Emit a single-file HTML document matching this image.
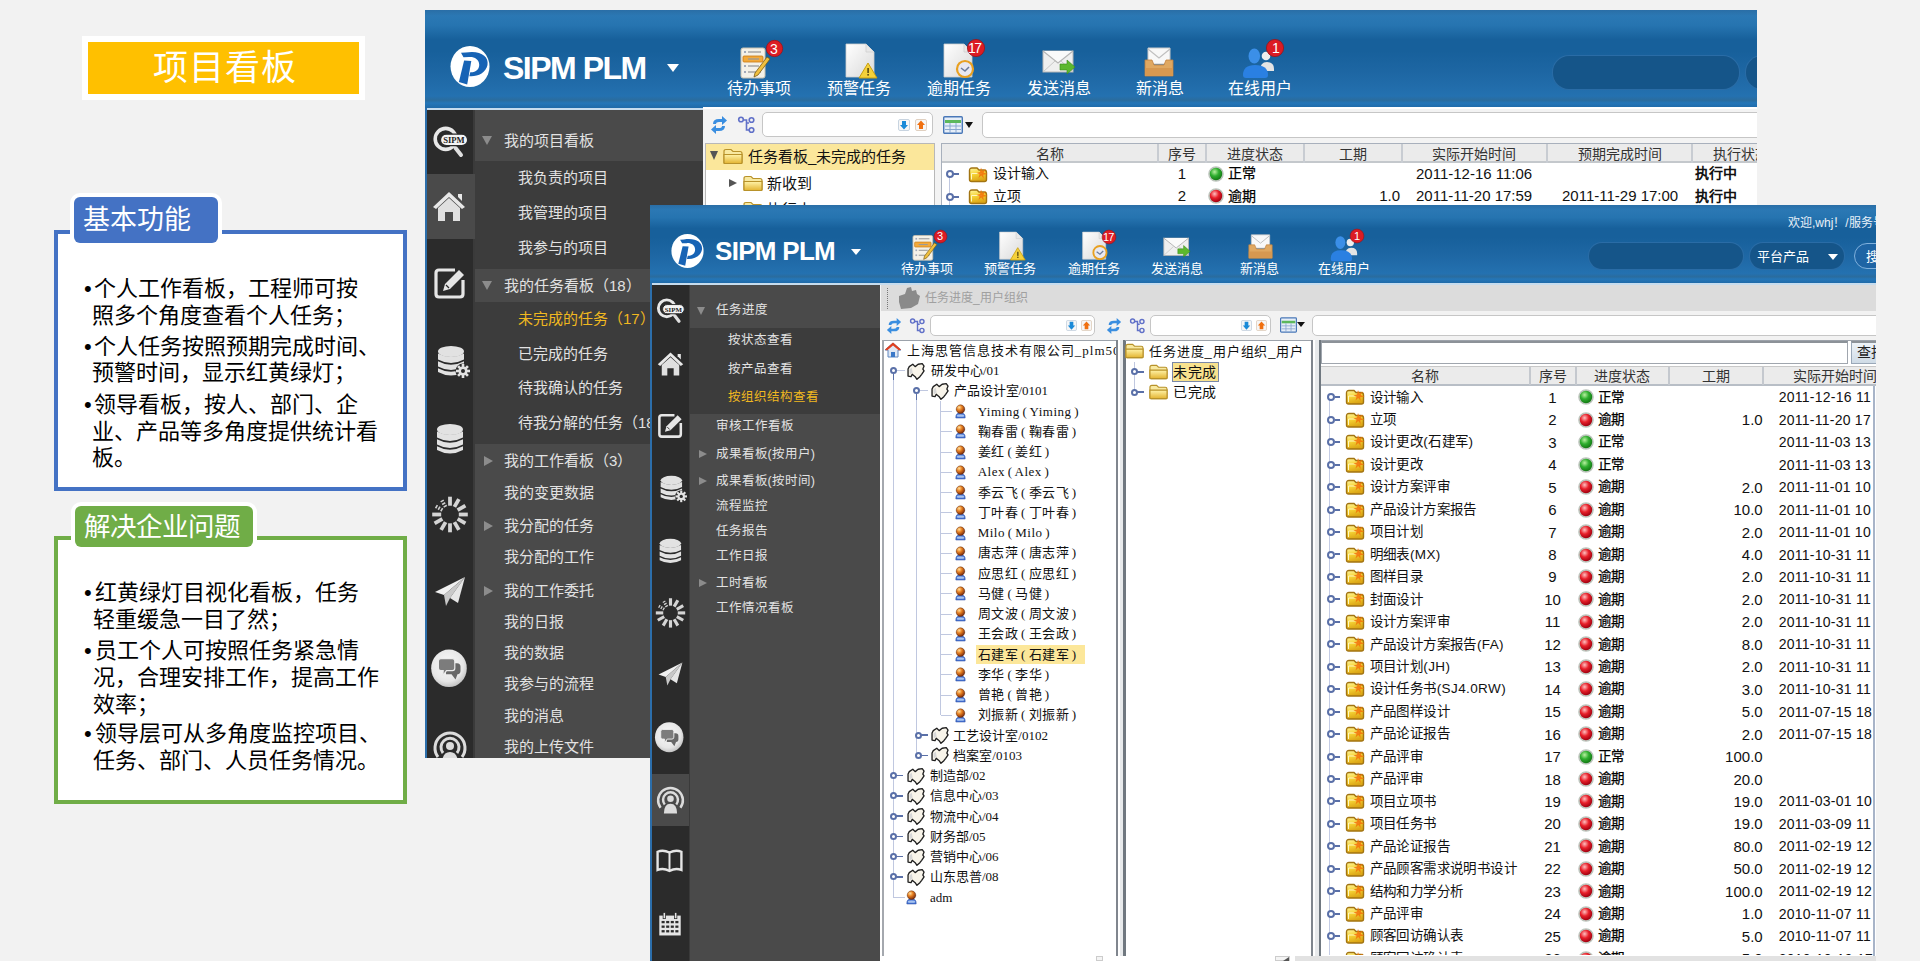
<!DOCTYPE html>
<html lang="zh-CN"><head><meta charset="utf-8">
<style>
*{margin:0;padding:0;box-sizing:border-box}
html,body{width:1920px;height:961px;overflow:hidden;background:#f2f2f2;font-family:"Liberation Sans",sans-serif}
.a{position:absolute}
.t{position:absolute;white-space:nowrap;line-height:1}
/* slide */
#title{left:82px;top:36px;width:283px;height:64px;background:#fff}
#title .in{left:6px;top:6px;width:271px;height:52px;background:#ffc000}
.box{border:4px solid #4472c4;background:#fff}
.tab{border-radius:6px;box-shadow:0 0 0 4px #fff}
.bul{font-size:22px;color:#000;line-height:26px}
/* windows */
.hdr{background:linear-gradient(#2a6ea6 0%,#2b78b4 6%,#2674b0 16%,#17609b 30%,#17609b 42%,#1e67a4 65%,#2471b0 88%,#2a6c9e 92%,#2476b8 95%,#1f6aa8 100%)}
.icol{background:#2b2b2b}
.menu{background:#4a4a4a}
.sub{background:#3c3c3c}
.mt{color:#e0e0e0}
.tri-d{width:0;height:0;border-left:5px solid transparent;border-right:5px solid transparent;border-top:9px solid #8c8c8c}
.tri-r{width:0;height:0;border-top:5px solid transparent;border-bottom:5px solid transparent;border-left:9px solid #8c8c8c}
</style></head><body>
<svg width="0" height="0" style="position:absolute">
<defs>
<linearGradient id="gPaper" x1="0" y1="0" x2="1" y2="1"><stop offset="0" stop-color="#ffffff"/><stop offset="1" stop-color="#d9d9d9"/></linearGradient>
<linearGradient id="gFold" x1="0" y1="0" x2="0" y2="1"><stop offset="0" stop-color="#fff3a8"/><stop offset="1" stop-color="#e3b431"/></linearGradient>
<radialGradient id="gGreen" cx="0.4" cy="0.35" r="0.6"><stop offset="0" stop-color="#b8f0a0"/><stop offset="0.5" stop-color="#2fae2f"/><stop offset="1" stop-color="#137a13"/></radialGradient>
<radialGradient id="gRed" cx="0.4" cy="0.35" r="0.6"><stop offset="0" stop-color="#ffc0c0"/><stop offset="0.5" stop-color="#e8202a"/><stop offset="1" stop-color="#a00010"/></radialGradient>
<radialGradient id="gChat" cx="0.45" cy="0.4" r="0.6"><stop offset="0" stop-color="#fafafa"/><stop offset="0.75" stop-color="#e6e6e6"/><stop offset="1" stop-color="#c4c4c4"/></radialGradient>
<symbol id="logo" viewBox="0 0 40 41"><ellipse cx="20" cy="20.5" rx="19.5" ry="20.5" fill="#fff"/><path d="M14.1 14.6 L21.3 15.1 L17.2 38.5 L8.9 35.9 Z" fill="#1763b5"/><path d="M11 6.8 L15.6 6.5 C30 4 39 10 37.5 19 C36 27 27 31 19.3 30.2 L20.3 26.3 C26 26.5 29.5 23 29.2 18.5 C29 13 24 10.5 19 11 L13.5 11.2 Z" fill="#1763b5"/></symbol>
<symbol id="i-todo" viewBox="0 0 30 34"><rect x="1" y="3" width="24" height="30" rx="2" fill="#f4f1e8" stroke="#c9c2b0" stroke-width="1"/><rect x="3" y="11" width="20" height="6" rx="1" fill="#f2a93b" stroke="#c97a10" stroke-width="0.8"/><g stroke="#9a9a9a" stroke-width="1.3"><line x1="8" y1="7" x2="21" y2="7"/><line x1="8" y1="14" x2="19" y2="14"/><line x1="8" y1="21" x2="19" y2="21"/><line x1="8" y1="27" x2="21" y2="27"/></g><g fill="#a0a8b8"><rect x="4" y="6" width="2" height="2"/><rect x="4" y="20" width="2" height="2"/><rect x="4" y="26" width="2" height="2"/></g><path d="M15 28 L27 12 L30 14 L18 30 L14 32 Z" fill="#f0c040" stroke="#7a5a10" stroke-width="0.8"/></symbol>
<symbol id="i-doc" viewBox="0 0 34 36"><path d="M2 1 H22 L30 9 V34 H2 Z" fill="url(#gPaper)" stroke="#cfcfcf" stroke-width="0.8"/><path d="M22 1 V9 H30" fill="#e8e8e8" stroke="#cfcfcf" stroke-width="0.8"/></symbol>
<symbol id="i-warn" viewBox="0 0 34 36"><use href="#i-doc"/><path d="M24 20 L33 35 H15 Z" fill="#f5d13a" stroke="#c9a010" stroke-width="1"/><rect x="23.3" y="25" width="1.6" height="5" fill="#5a4a10"/><rect x="23.3" y="31" width="1.6" height="1.6" fill="#5a4a10"/></symbol>
<symbol id="i-over" viewBox="0 0 34 36"><use href="#i-doc"/><circle cx="23" cy="26" r="8" fill="#e8e8f0" stroke="#e8a020" stroke-width="2.2"/><path d="M19 25 L23 28 L27 24" stroke="#6a7a9a" stroke-width="1.5" fill="none"/></symbol>
<symbol id="i-send" viewBox="0 0 34 26"><rect x="1" y="1" width="30" height="21" fill="#efefef" stroke="#b5b5b5" stroke-width="1"/><path d="M1 1 L16 13 L31 1" stroke="#b5b5b5" stroke-width="1.2" fill="#fafafa"/><path d="M1 22 L13 11 M31 22 L19 11" stroke="#c8c8c8" stroke-width="1"/><path d="M18 14 H25 V10 L33 17 L25 24 V20 H18 Z" fill="#5cb82e" stroke="#3a8a18" stroke-width="0.6"/></symbol>
<symbol id="i-inbox" viewBox="0 0 30 32"><path d="M4 2 H26 V18 H4 Z" fill="#f8f8f8" stroke="#c8c8c8" stroke-width="1"/><path d="M4 3 L15 12 L26 3" stroke="#c0c0c0" stroke-width="1.2" fill="none"/><path d="M1 14 H8 L10 19 H20 L22 14 H29 V30 H1 Z" fill="#e0a861" stroke="#c08040" stroke-width="0.8"/><rect x="1" y="22" width="28" height="8" fill="#d79850"/></symbol>
<symbol id="i-users" viewBox="0 0 34 34"><circle cx="25" cy="10" r="4.3" fill="#eeeeee"/><path d="M19 25 Q19 16 26 16 Q33 16 33 23 V25 Z" fill="#e4e4e4"/><ellipse cx="13.3" cy="10" rx="5.8" ry="7.5" fill="#3b8fe8"/><path d="M2 29 Q2 19 14 19 Q27 19 27 29 Q27 32 24 32 H5 Q2 32 2 29 Z" fill="#2a80e2"/></symbol>
<symbol id="badge" viewBox="0 0 20 20"><circle cx="10" cy="10" r="8.6" fill="#dc1c24" stroke="#9a1418" stroke-width="0.8"/></symbol>
<!-- sidebar icons -->
<symbol id="s-sipm" viewBox="0 0 40 40"><circle cx="14.7" cy="17.9" r="10.5" fill="none" stroke="#e8e8e8" stroke-width="3.6"/><path d="M24.5 27 L30 34" stroke="#e0e0e0" stroke-width="4" stroke-linecap="round"/><rect x="9.5" y="13.2" width="27.1" height="11.5" rx="5.7" fill="#f4f4f4" stroke="#2b2b2b" stroke-width="1.2"/><text x="23" y="21.9" font-family="Liberation Serif" font-size="8.6" text-anchor="middle" fill="#222" font-weight="bold">SIPM</text></symbol>
<symbol id="s-home" viewBox="0 0 34 34"><path d="M17 3 L1 18 L4 20 L17 8 L30 20 L33 18 Z" fill="#e8e8e8"/><path d="M26 5 H30 V12 L26 8 Z" fill="#e8e8e8"/><path d="M6 19 L17 9 L28 19 V32 H21 V23 H13 V32 H6 Z" fill="#e0e0e0"/></symbol>
<symbol id="s-edit" viewBox="0 0 34 34"><path d="M22 4 H6 Q3 4 3 7 V28 Q3 31 6 31 H27 Q30 31 30 28 V14" fill="none" stroke="#e6e6e6" stroke-width="3.2"/><path d="M10 25 L12 18 L26 4 L31 9 L17 23 Z" fill="#e6e6e6"/><path d="M13 19 L16 22" stroke="#2b2b2b" stroke-width="1.2"/></symbol>
<symbol id="s-db" viewBox="0 0 34 34"><g fill="#e2e2e2"><ellipse cx="15" cy="6.5" rx="13" ry="5.5"/><path d="M2 8.5 Q15 15.5 28 8.5 V14.5 Q15 21.5 2 14.5 Z"/><path d="M2 16.3 Q15 23.3 28 16.3 V21.5 Q15 28.5 2 21.5 Z"/><path d="M2 23.3 Q15 30.3 28 23.3 V27 Q15 34 2 27 Z"/></g></symbol>
<symbol id="s-dbg" viewBox="0 0 36 34"><use href="#s-db"/><circle cx="28" cy="26" r="7.5" fill="#2b2b2b"/><g transform="translate(28 26)" fill="#e2e2e2"><circle r="4.5"/><g id="teeth"><rect x="-1.3" y="-7" width="2.6" height="14"/><rect x="-7" y="-1.3" width="14" height="2.6"/><rect x="-1.3" y="-7" width="2.6" height="14" transform="rotate(45)"/><rect x="-1.3" y="-7" width="2.6" height="14" transform="rotate(-45)"/></g></g><circle cx="28" cy="26" r="2" fill="#2b2b2b"/></symbol>
<symbol id="s-spin" viewBox="0 0 40 40"><line x1="20.0" y1="11.7" x2="20.0" y2="2.7" stroke="#d4d4d4" stroke-width="3.8"/><line x1="24.4" y1="12.9" x2="28.9" y2="5.1" stroke="#d4d4d4" stroke-width="3.8"/><line x1="27.6" y1="16.1" x2="35.4" y2="11.6" stroke="#d4d4d4" stroke-width="3.8"/><line x1="28.8" y1="20.5" x2="37.8" y2="20.5" stroke="#d4d4d4" stroke-width="3.8"/><line x1="27.6" y1="24.9" x2="35.4" y2="29.4" stroke="#d4d4d4" stroke-width="3.8"/><line x1="24.4" y1="28.1" x2="28.9" y2="35.9" stroke="#d4d4d4" stroke-width="3.8"/><line x1="20.0" y1="29.3" x2="20.0" y2="38.3" stroke="#d4d4d4" stroke-width="3.8"/><line x1="15.6" y1="28.1" x2="11.1" y2="35.9" stroke="#d4d4d4" stroke-width="3.8"/><line x1="12.4" y1="24.9" x2="4.6" y2="29.4" stroke="#d4d4d4" stroke-width="3.8"/><line x1="11.2" y1="20.5" x2="2.2" y2="20.5" stroke="#d4d4d4" stroke-width="3.8"/><line x1="12.4" y1="16.1" x2="4.6" y2="11.6" stroke="#cfcfcf" stroke-width="3.6" stroke-dasharray="1.6 1.4"/><line x1="15.6" y1="12.9" x2="11.1" y2="5.1" stroke="#cfcfcf" stroke-width="3.6" stroke-dasharray="1.6 1.4"/></symbol>
<symbol id="s-plane" viewBox="0 0 34 34"><path d="M32 2 L2 17 L11 20 Z" fill="#f0f0f0"/><path d="M32 2 L11 20 L13 31 L17 23 Z" fill="#c8c8c8"/><path d="M32 2 L17 23 L25 28 Z" fill="#e6e6e6"/></symbol>
<symbol id="s-chat" viewBox="0 0 40 40"><ellipse cx="19" cy="20.3" rx="17.8" ry="18.8" fill="url(#gChat)"/><path d="M16 15.3 H27 Q30.5 15.3 30.5 18.8 V22.8 Q30.5 26.2 27.5 26.2 L25.5 31.5 L21.5 26.2 H16 Z" fill="#686868"/><path d="M10.8 10.6 H22.4 Q24.8 10.6 24.8 13 V20.2 Q24.8 22.6 22.4 22.6 H16.5 L12.8 27.8 L13.2 22.6 H10.8 Q8.4 22.6 8.4 20.2 V13 Q8.4 10.6 10.8 10.6 Z" fill="#7c7c7c" stroke="#ececec" stroke-width="1.2"/></symbol>
<symbol id="s-radar" viewBox="0 0 40 40"><g fill="none" stroke="#dcdcdc" stroke-width="3"><path d="M8 30 A15 15 0 1 1 32 30"/><path d="M13 26 A9 9 0 1 1 27 26"/></g><circle cx="20" cy="19" r="4" fill="#dcdcdc"/><path d="M12 37 Q12 25 20 25 Q28 25 28 37 Z" fill="#dcdcdc"/></symbol>
<symbol id="s-book" viewBox="0 0 34 34"><path d="M2 6 Q9 3 17 7 Q25 3 32 6 V29 Q25 26 17 30 Q9 26 2 29 Z" fill="none" stroke="#e6e6e6" stroke-width="3"/><line x1="17" y1="7" x2="17" y2="30" stroke="#e6e6e6" stroke-width="2.5"/></symbol>
<symbol id="s-cal" viewBox="0 0 34 34"><rect x="3" y="6" width="28" height="26" fill="#e6e6e6"/><rect x="8" y="2" width="3" height="8" fill="#e6e6e6" stroke="#2b2b2b" stroke-width="1"/><rect x="23" y="2" width="3" height="8" fill="#e6e6e6" stroke="#2b2b2b" stroke-width="1"/><g fill="#2b2b2b"><rect x="6" y="13" width="4" height="3"/><rect x="12" y="13" width="4" height="3"/><rect x="18" y="13" width="4" height="3"/><rect x="24" y="13" width="4" height="3"/><rect x="6" y="19" width="4" height="3"/><rect x="12" y="19" width="4" height="3"/><rect x="18" y="19" width="4" height="3"/><rect x="24" y="19" width="4" height="3"/><rect x="6" y="25" width="4" height="3"/><rect x="12" y="25" width="4" height="3"/><rect x="18" y="25" width="4" height="3"/><rect x="24" y="25" width="4" height="3"/></g></symbol>
<!-- content icons -->
<symbol id="c-refresh" viewBox="0 0 18 18"><path d="M3 8 Q3 3 9 3 H12 V0 L17 4.5 L12 9 V6 H9 Q6 6 6 8 Z" fill="#3a8ee0"/><path d="M15 10 Q15 15 9 15 H6 V18 L1 13.5 L6 9 V12 H9 Q12 12 12 10 Z" fill="#3a8ee0"/></symbol>
<symbol id="c-tree" viewBox="0 0 18 18"><g fill="none" stroke="#6070c8" stroke-width="1.6"><circle cx="3.5" cy="3.5" r="2.3"/><circle cx="14" cy="4" r="2.3"/><circle cx="14" cy="14" r="2.3"/><path d="M6 4 H9 V14 H11.5 M9 7 H11.5"/></g></symbol>
<symbol id="c-down" viewBox="0 0 12 12"><rect x="0.5" y="0.5" width="11" height="11" rx="1.5" fill="#f6f6f6" stroke="#c8d4e0"/><path d="M4 2 H8 V6 H10 L6 10.5 L2 6 H4 Z" fill="#1a8ad8"/></symbol>
<symbol id="c-up" viewBox="0 0 12 12"><rect x="0.5" y="0.5" width="11" height="11" rx="1.5" fill="#f6f6f6" stroke="#e0d0c0"/><path d="M4 10 H8 V6 H10 L6 1.5 L2 6 H4 Z" fill="#f07010"/></symbol>
<symbol id="c-grid" viewBox="0 0 20 18"><rect x="0.7" y="0.7" width="18.6" height="16.6" rx="1" fill="#e6eef8" stroke="#4a78b8" stroke-width="1.4"/><rect x="2" y="4" width="16" height="3" fill="#5cb85c"/><g stroke="#8aa8d0" stroke-width="1"><line x1="2" y1="10" x2="18" y2="10"/><line x1="2" y1="13.5" x2="18" y2="13.5"/><line x1="7" y1="7" x2="7" y2="17"/><line x1="13" y1="7" x2="13" y2="17"/></g></symbol>
<symbol id="c-folder" viewBox="0 0 20 16"><path d="M1 3 Q1 1 3 1 H8 L10 3 H17 Q19 3 19 5 V14 Q19 15 18 15 H2 Q1 15 1 14 Z" fill="#f8e9a0" stroke="#b8922a" stroke-width="1.2"/><path d="M1 6 H19 V14 Q19 15 18 15 H2 Q1 15 1 14 Z" fill="url(#gFold)" stroke="#b8922a" stroke-width="1.2"/></symbol>
<symbol id="c-tfolder" viewBox="0 0 20 16"><defs><linearGradient id="gTF" x1="0" y1="0" x2="0.3" y2="1"><stop offset="0" stop-color="#fff6a0"/><stop offset="0.5" stop-color="#f6d436"/><stop offset="1" stop-color="#dca616"/></linearGradient></defs><path d="M1.5 4 Q1.5 1.5 4 1.5 H9 L11 3.5 H16 Q18.5 3.5 18.5 6 V13 Q18.5 15 16.5 15 H3.5 Q1.5 15 1.5 13 Z" fill="url(#gTF)" stroke="#a27412" stroke-width="1.4"/><path d="M3.5 7 H14 M3.5 7 V13" stroke="#fff8c0" stroke-width="1" fill="none"/><path d="M13 1 L14.3 4.5 L18 2.5 L15.6 6 L19.5 7.5 L15.2 8.2 L15.8 12 L13.2 9 L10.5 11.5 L11.6 7.8 L8.5 6.5 L12 5.5 Z" fill="#f2760c" opacity="0.9"/></symbol>
<symbol id="c-house" viewBox="0 0 16 16"><path d="M8 1 L0 8 H3 V15 H13 V8 H16 Z" fill="#e0e8f4" stroke="#6088c0" stroke-width="1"/><path d="M8 0.5 L0 7.5 L2 8.5 L8 3.5 L14 8.5 L16 7.5 Z" fill="#e04020"/><rect x="6" y="10" width="4" height="5" fill="#3a78c8"/></symbol>
<symbol id="c-org" viewBox="0 0 19 19"><path d="M1.1 7.4 L2.4 4.9 L6.1 2.4 L8.6 4.9 L11.75 2.4 L16.1 1.75 L18 4.25 L16.75 7.4 L18 9.25 L15.5 13 L13.6 15.5 L10.5 18.3 L8.6 15.5 L5.5 13 L4.25 15.5 L1.1 14.9 L1.1 10.5 Z" fill="#f8f4ea" stroke="#1e1e1e" stroke-width="1.4" stroke-linejoin="round"/><path d="M2.5 8 L5 6 L6 11 L3 13 Z" fill="#d8d8d8"/></symbol>
<symbol id="c-user" viewBox="0 0 14 16"><defs><radialGradient id="gHead" cx="0.35" cy="0.3" r="0.7"><stop offset="0" stop-color="#ffe0a0"/><stop offset="0.45" stop-color="#e88020"/><stop offset="1" stop-color="#803010"/></radialGradient></defs><path d="M2 15.5 Q1.5 10 7 10 Q12.5 10 12 15.5 Z" fill="#4a78d8" stroke="#2a4aa0" stroke-width="0.6"/><ellipse cx="7" cy="13" rx="4" ry="1.3" fill="#a8c4f0"/><circle cx="7" cy="6" r="4.6" fill="url(#gHead)" stroke="#5a2a10" stroke-width="0.5"/></symbol>
<symbol id="c-dot" viewBox="0 0 14 14"><circle cx="7" cy="7" r="6.5" fill="#d8d8d8"/></symbol>
</defs></svg>

<!-- ============ LEFT SLIDE ============ -->
<div id="title" class="a"><div class="a in"></div>
<div class="t" style="left:71px;top:15px;font-family:'Liberation Serif',serif;font-size:35px;color:#fff;letter-spacing:1px">项目看板</div></div>

<div class="a box" style="left:54px;top:230px;width:353px;height:261px"></div>
<div class="a tab" style="left:74px;top:197px;width:144px;height:46px;background:#4472c4"></div>
<div class="t" style="left:82.5px;top:207px;font-size:27px;color:#fff">基本功能</div>
<div class="a bul" style="left:84px;top:278px;width:310px">
<div class="t" style="left:0;top:0"><span style="margin-right:2.5px">•</span>个人工作看板，工程师可按</div>
<div class="t" style="left:7.5px;top:27px">照多个角度查看个人任务；</div>
<div class="t" style="left:0;top:58px"><span style="margin-right:2.5px">•</span>个人任务按照预期完成时间、</div>
<div class="t" style="left:7.5px;top:84px">预警时间，显示红黄绿灯；</div>
<div class="t" style="left:0;top:116px"><span style="margin-right:2.5px">•</span>领导看板，按人、部门、企</div>
<div class="t" style="left:7.5px;top:143px">业、产品等多角度提供统计看</div>
<div class="t" style="left:7.5px;top:169px">板。</div>
</div>
<div class="a box" style="left:54px;top:536px;width:353px;height:268px;border-color:#70ad47"></div>
<div class="a tab" style="left:75px;top:506px;width:178px;height:41px;background:#70ad47"></div>
<div class="t" style="left:84px;top:513.5px;font-size:26.5px;color:#fff">解决企业问题</div>
<div class="a bul" style="left:84px;top:582px;width:310px">
<div class="t" style="left:0;top:0"><span style="margin-right:3px">•</span>红黄绿灯目视化看板，任务</div>
<div class="t" style="left:9px;top:27px">轻重缓急一目了然；</div>
<div class="t" style="left:0;top:58px"><span style="margin-right:3px">•</span>员工个人可按照任务紧急情</div>
<div class="t" style="left:9px;top:85px">况，合理安排工作，提高工作</div>
<div class="t" style="left:9px;top:112px">效率；</div>
<div class="t" style="left:0;top:141px"><span style="margin-right:3px">•</span>领导层可从多角度监控项目、</div>
<div class="t" style="left:9px;top:168px">任务、部门、人员任务情况。</div>
</div>

<!-- ============ BACK WINDOW ============ -->
<div id="w1" class="a" style="left:425px;top:10px;width:1332px;height:748px;background:#fff;overflow:hidden">
  <div class="a hdr" style="left:0;top:0;width:1332px;height:98px"></div>

  <!-- header content -->
  <svg class="a" style="left:25px;top:36px" width="40" height="41"><use href="#logo"/></svg>
  <div class="t" style="left:78px;top:42px;font-size:32px;font-weight:bold;color:#fff;letter-spacing:-1.5px">SIPM PLM</div>
  <div class="a" style="left:242px;top:54px;width:0;height:0;border-left:6.5px solid transparent;border-right:6.5px solid transparent;border-top:8px solid #fff"></div>
  <svg class="a" style="left:315px;top:35px" width="30" height="34"><use href="#i-todo"/></svg>
  <svg class="a" style="left:340px;top:29px" width="19" height="19"><use href="#badge"/></svg><div class="t" style="left:345px;top:32px;font-size:14px;color:#fff">3</div>
  <div class="t" style="left:302px;top:71px;font-size:16px;color:#fff">待办事项</div>
  <svg class="a" style="left:419px;top:33px" width="34" height="36"><use href="#i-warn"/></svg>
  <div class="t" style="left:402px;top:71px;font-size:16px;color:#fff">预警任务</div>
  <svg class="a" style="left:517px;top:33px" width="34" height="36"><use href="#i-over"/></svg>
  <svg class="a" style="left:541px;top:28px" width="20" height="20"><use href="#badge"/></svg><div class="t" style="left:543px;top:31px;font-size:14px;color:#fff;letter-spacing:-1.5px">17</div>
  <div class="t" style="left:502px;top:71px;font-size:16px;color:#fff">逾期任务</div>
  <svg class="a" style="left:617px;top:40px" width="34" height="26"><use href="#i-send"/></svg>
  <div class="t" style="left:602px;top:71px;font-size:16px;color:#fff">发送消息</div>
  <svg class="a" style="left:719px;top:36px" width="30" height="32"><use href="#i-inbox"/></svg>
  <div class="t" style="left:711px;top:71px;font-size:16px;color:#fff">新消息</div>
  <svg class="a" style="left:816px;top:36px" width="34" height="34"><use href="#i-users"/></svg>
  <svg class="a" style="left:840px;top:28px" width="20" height="20"><use href="#badge"/></svg><div class="t" style="left:847px;top:31px;font-size:14px;color:#fff">1</div>
  <div class="t" style="left:803px;top:71px;font-size:16px;color:#fff">在线用户</div>
  <div class="a" style="left:1128px;top:46px;width:186px;height:33px;border-radius:16px;background:#155589;box-shadow:0 0 0 1px #2a6ca6"></div>
  <div class="a" style="left:1321px;top:46px;width:40px;height:33px;border-radius:16px;background:#155589;box-shadow:0 0 0 1px #2a6ca6"></div>
  <div class="a" style="left:0;top:98px;width:1332px;height:2px;background:#c6dcee"></div>
  <div class="a" style="left:0;top:98px;width:2px;height:650px;background:#2c6eaa"></div>
  <div class="a icol" style="left:2px;top:100px;width:46px;height:648px"></div>
  <div class="a" style="left:48px;top:100px;width:2px;height:648px;background:#3a3a3a"></div>
  <div class="a menu" style="left:50px;top:100px;width:228px;height:648px"></div>
  <div class="a menu" style="left:2px;top:164px;width:48px;height:65px"></div>
  <svg class="a" style="left:6px;top:111px" width="40" height="40"><use href="#s-sipm"/></svg>
  <svg class="a" style="left:7px;top:179px" width="34" height="34"><use href="#s-home"/></svg>
  <svg class="a" style="left:8px;top:256px" width="34" height="34"><use href="#s-edit"/></svg>
  <svg class="a" style="left:10px;top:335px" width="36" height="34"><use href="#s-dbg"/></svg>
  <svg class="a" style="left:10px;top:413px" width="34" height="34"><use href="#s-db"/></svg>
  <svg class="a" style="left:5px;top:484px" width="40" height="40"><use href="#s-spin"/></svg>
  <svg class="a" style="left:8px;top:565px" width="34" height="34"><use href="#s-plane"/></svg>
  <svg class="a" style="left:5px;top:638px" width="40" height="40"><use href="#s-chat"/></svg>
  <svg class="a" style="left:5px;top:717px" width="40" height="40"><use href="#s-radar"/></svg>
  <div class="a sub" style="left:50px;top:151px;width:228px;height:108px"></div>
  <div class="a sub" style="left:50px;top:292px;width:228px;height:142px"></div>
  <div class="t mt" style="left:79px;top:123px;font-size:15px;color:#e2e2e2">我的项目看板</div>
  <div class="a tri-d" style="left:57px;top:126px"></div>
  <div class="t mt" style="left:93px;top:160px;font-size:15px;color:#e2e2e2">我负责的项目</div>
  <div class="t mt" style="left:93px;top:195px;font-size:15px;color:#e2e2e2">我管理的项目</div>
  <div class="t mt" style="left:93px;top:230px;font-size:15px;color:#e2e2e2">我参与的项目</div>
  <div class="t mt" style="left:79px;top:268px;font-size:15px;color:#e2e2e2">我的任务看板（18）</div>
  <div class="a tri-d" style="left:57px;top:271px"></div>
  <div class="t mt" style="left:93px;top:301px;font-size:15px;color:#f0b820">未完成的任务（17）</div>
  <div class="t mt" style="left:93px;top:336px;font-size:15px;color:#e2e2e2">已完成的任务</div>
  <div class="t mt" style="left:93px;top:370px;font-size:15px;color:#e2e2e2">待我确认的任务</div>
  <div class="t mt" style="left:93px;top:405px;font-size:15px;color:#e2e2e2">待我分解的任务（18）</div>
  <div class="t mt" style="left:79px;top:443px;font-size:15px;color:#e2e2e2">我的工作看板（3）</div>
  <div class="a tri-r" style="left:59px;top:446px"></div>
  <div class="t mt" style="left:79px;top:475px;font-size:15px;color:#e2e2e2">我的变更数据</div>
  <div class="t mt" style="left:79px;top:508px;font-size:15px;color:#e2e2e2">我分配的任务</div>
  <div class="a tri-r" style="left:59px;top:511px"></div>
  <div class="t mt" style="left:79px;top:539px;font-size:15px;color:#e2e2e2">我分配的工作</div>
  <div class="t mt" style="left:79px;top:573px;font-size:15px;color:#e2e2e2">我的工作委托</div>
  <div class="a tri-r" style="left:59px;top:576px"></div>
  <div class="t mt" style="left:79px;top:604px;font-size:15px;color:#e2e2e2">我的日报</div>
  <div class="t mt" style="left:79px;top:635px;font-size:15px;color:#e2e2e2">我的数据</div>
  <div class="t mt" style="left:79px;top:666px;font-size:15px;color:#e2e2e2">我参与的流程</div>
  <div class="t mt" style="left:79px;top:698px;font-size:15px;color:#e2e2e2">我的消息</div>
  <div class="t mt" style="left:79px;top:729px;font-size:15px;color:#e2e2e2">我的上传文件</div>
  <div class="a" style="left:278px;top:100px;width:1054px;height:648px;background:#fff"></div>
  <div class="a" style="left:278px;top:98px;width:1060px;height:100px;background:#f3f3f3"></div>
  <div class="a" style="left:278px;top:97px;width:1060px;height:2px;background:#fff"></div>
  <svg class="a" style="left:285px;top:106px" width="18" height="18"><use href="#c-refresh"/></svg>
  <svg class="a" style="left:312px;top:106px" width="19" height="18"><use href="#c-tree"/></svg>
  <div class="a" style="left:337px;top:102px;width:171px;height:25px;border:1px solid #c6c6c6;border-radius:5px;background:#fff"></div>
  <svg class="a" style="left:473px;top:109px" width="12" height="12"><use href="#c-down"/></svg>
  <svg class="a" style="left:490px;top:109px" width="12" height="12"><use href="#c-up"/></svg>
  <div class="a" style="left:280px;top:133px;width:230px;height:70px;border:1px solid #b8b8b8;background:#fff"></div>
  <div class="a" style="left:281px;top:134px;width:228px;height:26px;background:#fbe79b"></div>
  <div class="a" style="left:285px;top:141px;width:0;height:0;border-left:4.5px solid transparent;border-right:4.5px solid transparent;border-top:9px solid #555"></div>
  <svg class="a" style="left:298px;top:138px" width="20" height="17"><use href="#c-folder"/></svg>
  <div class="t" style="left:323px;top:139px;font-size:15px;color:#111">任务看板_未完成的任务</div>
  <div class="a" style="left:304px;top:169px;width:0;height:0;border-top:4.5px solid transparent;border-bottom:4.5px solid transparent;border-left:8px solid #555"></div>
  <svg class="a" style="left:318px;top:165px" width="20" height="17"><use href="#c-folder"/></svg>
  <div class="t" style="left:342px;top:166px;font-size:15px;color:#111">新收到</div>
  <svg class="a" style="left:318px;top:191px" width="20" height="17"><use href="#c-folder"/></svg>
  <div class="t" style="left:342px;top:192px;font-size:15px;color:#111">执行中</div>
  <svg class="a" style="left:518px;top:106px" width="20" height="18"><use href="#c-grid"/></svg>
  <div class="a" style="left:540px;top:112px;width:0;height:0;border-left:4.5px solid transparent;border-right:4.5px solid transparent;border-top:6px solid #111"></div>
  <div class="a" style="left:557px;top:102px;width:800px;height:26px;border:1px solid #c6c6c6;border-radius:5px;background:#fff"></div>
  <div class="a" style="left:516px;top:133px;width:830px;height:70px;border:1px solid #a8b0bc;background:#fff"></div>
  <div class="a" style="left:517px;top:134px;width:830px;height:19px;background:#ebebeb;border-bottom:2px solid #c4c8cc"></div>
  <div class="a" style="left:731.5px;top:134px;width:2px;height:19px;background:#c8ccd2"></div>
  <div class="t" style="left:517px;top:137px;width:215.5px;text-align:center;font-size:14px;color:#333">名称</div>
  <div class="a" style="left:780.0px;top:134px;width:2px;height:19px;background:#c8ccd2"></div>
  <div class="t" style="left:733px;top:137px;width:48px;text-align:center;font-size:14px;color:#333">序号</div>
  <div class="a" style="left:878.0px;top:134px;width:2px;height:19px;background:#c8ccd2"></div>
  <div class="t" style="left:781px;top:137px;width:98px;text-align:center;font-size:14px;color:#333">进度状态</div>
  <div class="a" style="left:975.5px;top:134px;width:2px;height:19px;background:#c8ccd2"></div>
  <div class="t" style="left:879px;top:137px;width:97.5px;text-align:center;font-size:14px;color:#333">工期</div>
  <div class="a" style="left:1121.0px;top:134px;width:2px;height:19px;background:#c8ccd2"></div>
  <div class="t" style="left:976.5px;top:137px;width:145.5px;text-align:center;font-size:14px;color:#333">实际开始时间</div>
  <div class="a" style="left:1266.4px;top:134px;width:2px;height:19px;background:#c8ccd2"></div>
  <div class="t" style="left:1122px;top:137px;width:145.4000000000001px;text-align:center;font-size:14px;color:#333">预期完成时间</div>
  <div class="a" style="left:1374.0px;top:134px;width:2px;height:19px;background:#c8ccd2"></div>
  <div class="t" style="left:1288px;top:137px;font-size:14px;color:#333">执行状态</div>
  <div class="a" style="left:524px;top:164px;width:1px;height:40px;background:#c0c8e0"></div>
  <div class="a" style="left:520.5px;top:160px;width:8px;height:8px;border:2px solid #5a70a8;border-radius:50%;background:#fff"></div>
  <div class="a" style="left:528px;top:163px;width:6px;height:2px;background:#5a70a8"></div>
  <svg class="a" style="left:543px;top:156px" width="20" height="17"><use href="#c-tfolder"/></svg>
  <div class="t" style="left:568px;top:156px;font-size:14px;color:#111">设计输入</div>
  <div class="t" style="left:733px;top:156px;width:48px;text-align:center;font-size:15px;color:#111">1</div>
  <svg class="a" style="left:783px;top:156px" width="16" height="16"><circle cx="8" cy="8" r="7" fill="url(#gGreen)" stroke="#bcc4bc" stroke-width="1.6"/></svg>
  <div class="t" style="left:803px;top:156px;font-size:14px;color:#000;-webkit-text-stroke:0.25px #000">正常</div>
  <div class="t" style="left:991px;top:156px;font-size:15px;color:#111">2011-12-16 11:06</div>
  <div class="t" style="left:1270px;top:156px;font-size:14px;color:#111;font-weight:bold">执行中</div>
  <div class="a" style="left:520.5px;top:182.5px;width:8px;height:8px;border:2px solid #5a70a8;border-radius:50%;background:#fff"></div>
  <div class="a" style="left:528px;top:185.5px;width:6px;height:2px;background:#5a70a8"></div>
  <svg class="a" style="left:543px;top:178px" width="20" height="17"><use href="#c-tfolder"/></svg>
  <div class="t" style="left:568px;top:179px;font-size:14px;color:#111">立项</div>
  <div class="t" style="left:733px;top:178px;width:48px;text-align:center;font-size:15px;color:#111">2</div>
  <svg class="a" style="left:783px;top:178px" width="16" height="16"><circle cx="8" cy="8" r="7" fill="url(#gRed)" stroke="#bcc4bc" stroke-width="1.6"/></svg>
  <div class="t" style="left:803px;top:179px;font-size:14px;color:#000;-webkit-text-stroke:0.25px #000">逾期</div>
  <div class="t" style="left:879px;top:178px;width:96px;text-align:right;font-size:15px;color:#111">1.0</div>
  <div class="t" style="left:991px;top:178px;font-size:15px;color:#111">2011-11-20 17:59</div>
  <div class="a" style="left:1135px;top:177px;width:118px;height:18px;overflow:hidden"><div class="t" style="left:2px;top:1px;font-size:15px;color:#111">2011-11-29 17:00</div></div>
  <div class="t" style="left:1270px;top:179px;font-size:14px;color:#111;font-weight:bold">执行中</div>
</div>

<!-- ============ FRONT WINDOW ============ -->
<div id="w2" class="a" style="left:650px;top:205px;width:1226px;height:756px;background:#fff;overflow:hidden">
  <div class="a hdr" style="left:0;top:0;width:1226px;height:78px"></div>
  <svg class="a" style="left:21.0px;top:29.0px" width="33" height="34"><use href="#logo"/></svg>
  <div class="t" style="left:65.0px;top:33.0px;font-size:26px;font-weight:bold;color:#fff;letter-spacing:-0.7px">SIPM PLM</div>
  <div class="a" style="left:201.0px;top:44.0px;width:0;height:0;border-left:5.5px solid transparent;border-right:5.5px solid transparent;border-top:6.5px solid #fff"></div>
  <svg class="a" style="left:262.0px;top:28.0px" width="25" height="28"><use href="#i-todo"/></svg>
  <svg class="a" style="left:283.0px;top:24.0px" width="15" height="15"><use href="#badge"/></svg>
  <div class="t" style="left:287.0px;top:26.0px;font-size:11px;color:#fff">3</div>
  <div class="t" style="left:251.0px;top:57.0px;font-size:13px;color:#fff">待办事项</div>
  <svg class="a" style="left:348.0px;top:26.0px" width="28" height="30"><use href="#i-warn"/></svg>
  <div class="t" style="left:334.0px;top:57.0px;font-size:13px;color:#fff">预警任务</div>
  <svg class="a" style="left:431.0px;top:26.0px" width="28" height="30"><use href="#i-over"/></svg>
  <svg class="a" style="left:451.0px;top:24.0px" width="16" height="16"><use href="#badge"/></svg>
  <div class="t" style="left:453.0px;top:26.5px;font-size:11px;color:#fff;letter-spacing:-0.8px">17</div>
  <div class="t" style="left:418.0px;top:57.0px;font-size:13px;color:#fff">逾期任务</div>
  <svg class="a" style="left:513.0px;top:32.0px" width="28" height="22"><use href="#i-send"/></svg>
  <div class="t" style="left:501.0px;top:57.0px;font-size:13px;color:#fff">发送消息</div>
  <svg class="a" style="left:598.0px;top:28.0px" width="25" height="27"><use href="#i-inbox"/></svg>
  <div class="t" style="left:590.0px;top:57.0px;font-size:13px;color:#fff">新消息</div>
  <svg class="a" style="left:679.0px;top:29.0px" width="29" height="29"><use href="#i-users"/></svg>
  <svg class="a" style="left:699.0px;top:23.0px" width="16" height="16"><use href="#badge"/></svg>
  <div class="t" style="left:704.0px;top:26.0px;font-size:11px;color:#fff">1</div>
  <div class="t" style="left:668.0px;top:57.0px;font-size:13px;color:#fff">在线用户</div>
  <div class="t" style="left:1138.0px;top:12.0px;font-size:12px;color:#e8f0f8">欢迎,whj！/服务号</div>
  <div class="a" style="left:939.0px;top:38.0px;width:154px;height:26px;border-radius:13px;background:#155589;box-shadow:0 0 0 1px #2a6ca6"></div>
  <div class="a" style="left:1100.0px;top:38.0px;width:94px;height:26px;border-radius:13px;background:#155589;box-shadow:0 0 0 1px #2a6ca6"></div>
  <div class="t" style="left:1107.0px;top:45.0px;font-size:13px;color:#fff">平台产品</div>
  <div class="a" style="left:1178.0px;top:49.0px;width:0;height:0;border-left:5.5px solid transparent;border-right:5.5px solid transparent;border-top:6px solid #fff"></div>
  <div class="a" style="left:1204.0px;top:38.0px;width:60px;height:26px;border-radius:13px;border:1px solid #7fb0dc;background:#1e64a4"></div>
  <div class="t" style="left:1216.0px;top:45.0px;font-size:13px;color:#fff">搜索</div>
  <div class="a" style="left:0;top:78px;width:1226px;height:2px;background:#c6dcee"></div>
  <div class="a" style="left:0;top:78px;width:2px;height:678px;background:#2c6eaa"></div>
  <div class="a icol" style="left:2px;top:80px;width:38px;height:676px"></div>
  <div class="a menu" style="left:40px;top:80px;width:190px;height:676px"></div>
  <div class="a menu" style="left:2.0px;top:569.0px;width:38px;height:52px"></div>
  <div class="a" style="left:39.0px;top:80.0px;width:1px;height:676px;background:#3a3a3a"></div>
  <svg class="a" style="left:5.0px;top:89.0px" width="32" height="32"><use href="#s-sipm"/></svg>
  <svg class="a" style="left:7.0px;top:145.0px" width="27" height="27"><use href="#s-home"/></svg>
  <svg class="a" style="left:7.0px;top:207.0px" width="27" height="27"><use href="#s-edit"/></svg>
  <svg class="a" style="left:8.0px;top:270.0px" width="30" height="28"><use href="#s-dbg"/></svg>
  <svg class="a" style="left:8.0px;top:333.0px" width="28" height="28"><use href="#s-db"/></svg>
  <svg class="a" style="left:4.0px;top:391.0px" width="33" height="33"><use href="#s-spin"/></svg>
  <svg class="a" style="left:7.0px;top:456.0px" width="27" height="27"><use href="#s-plane"/></svg>
  <svg class="a" style="left:4.0px;top:516.0px" width="32" height="32"><use href="#s-chat"/></svg>
  <svg class="a" style="left:4.0px;top:578.0px" width="33" height="33"><use href="#s-radar"/></svg>
  <svg class="a" style="left:6.0px;top:642.0px" width="27" height="27"><use href="#s-book"/></svg>
  <svg class="a" style="left:7.0px;top:705.0px" width="26" height="28"><use href="#s-cal"/></svg>
  <div class="a sub" style="left:40.0px;top:122.8px;width:190px;height:86.2px"></div>
  <div class="t" style="left:65.6px;top:99.4px;font-size:12.5px;color:#e2e2e2">任务进度</div>
  <div class="a" style="left:47.0px;top:101.9px;width:0;height:0;border-left:4.5px solid transparent;border-right:4.5px solid transparent;border-top:8px solid #8c8c8c"></div>
  <div class="t" style="left:77.7px;top:129.4px;font-size:12.5px;color:#e2e2e2">按状态查看</div>
  <div class="t" style="left:77.7px;top:157.5px;font-size:12.5px;color:#e2e2e2">按产品查看</div>
  <div class="t" style="left:77.7px;top:185.5px;font-size:12.5px;color:#f0b820">按组织结构查看</div>
  <div class="t" style="left:65.6px;top:214.5px;font-size:12.5px;color:#e2e2e2">审核工作看板</div>
  <div class="t" style="left:65.6px;top:242.5px;font-size:12.5px;color:#e2e2e2">成果看板(按用户)</div>
  <div class="a" style="left:49.0px;top:244.5px;width:0;height:0;border-top:4.5px solid transparent;border-bottom:4.5px solid transparent;border-left:8px solid #8c8c8c"></div>
  <div class="t" style="left:65.6px;top:270.1px;font-size:12.5px;color:#e2e2e2">成果看板(按时间)</div>
  <div class="a" style="left:49.0px;top:272.1px;width:0;height:0;border-top:4.5px solid transparent;border-bottom:4.5px solid transparent;border-left:8px solid #8c8c8c"></div>
  <div class="t" style="left:65.6px;top:294.9px;font-size:12.5px;color:#e2e2e2">流程监控</div>
  <div class="t" style="left:65.6px;top:319.7px;font-size:12.5px;color:#e2e2e2">任务报告</div>
  <div class="t" style="left:65.6px;top:344.5px;font-size:12.5px;color:#e2e2e2">工作日报</div>
  <div class="t" style="left:65.6px;top:371.5px;font-size:12.5px;color:#e2e2e2">工时看板</div>
  <div class="a" style="left:49.0px;top:373.5px;width:0;height:0;border-top:4.5px solid transparent;border-bottom:4.5px solid transparent;border-left:8px solid #8c8c8c"></div>
  <div class="t" style="left:65.6px;top:397.0px;font-size:12.5px;color:#e2e2e2">工作情况看板</div>
  <div class="a" style="left:230px;top:80px;width:996px;height:676px;background:#f4f4f4"></div>
  <div class="a" style="left:231.0px;top:80.0px;width:999.0px;height:26.0px;background:#dcdcdc"></div>
  <div class="a" style="left:237.0px;top:83.0px;width:1.0px;height:21.0px;border-left:1px dotted #777"></div>
  <svg class="a" style="left:247.0px;top:81.0px" width="24" height="24" viewBox="0 0 24 24"><path d="M2 10 L8 8 L10 2 L14 1 L15 5 L19 4 L20 8 L23 10 L21 18 L14 22 L4 23 L2 16 Z" fill="#8a8a8a"/></svg>
  <div class="t" style="left:275.0px;top:87.0px;font-size:12px;color:#a0a0a0">任务进度_用户组织</div>
  <div class="a" style="left:231.0px;top:106.0px;width:999.0px;height:29.0px;background:#f2f2f2"></div>
  <svg class="a" style="left:236.0px;top:113.0px" width="16" height="16"><use href="#c-refresh"/></svg>
  <svg class="a" style="left:259.0px;top:113.0px" width="17" height="16"><use href="#c-tree"/></svg>
  <div class="a" style="left:280.0px;top:110.0px;width:165.0px;height:21.0px;border:1px solid #c6c6c6;border-radius:5px;background:#fff"></div>
  <svg class="a" style="left:416.0px;top:115.0px" width="11" height="11"><use href="#c-down"/></svg>
  <svg class="a" style="left:431.0px;top:115.0px" width="11" height="11"><use href="#c-up"/></svg>
  <svg class="a" style="left:456.0px;top:113.0px" width="16" height="16"><use href="#c-refresh"/></svg>
  <svg class="a" style="left:479.0px;top:113.0px" width="17" height="16"><use href="#c-tree"/></svg>
  <div class="a" style="left:500.0px;top:110.0px;width:121.0px;height:21.0px;border:1px solid #c6c6c6;border-radius:5px;background:#fff"></div>
  <svg class="a" style="left:591.0px;top:115.0px" width="11" height="11"><use href="#c-down"/></svg>
  <svg class="a" style="left:606.0px;top:115.0px" width="11" height="11"><use href="#c-up"/></svg>
  <svg class="a" style="left:630.0px;top:112.0px" width="17" height="16"><use href="#c-grid"/></svg>
  <div class="a" style="left:647.0px;top:117.0px;width:0;height:0;border-left:4px solid transparent;border-right:4px solid transparent;border-top:5px solid #111"></div>
  <div class="a" style="left:662.0px;top:110.0px;width:588.0px;height:21.0px;border:1px solid #c6c6c6;border-radius:5px;background:#fff"></div>
  <div class="a" style="left:230.0px;top:135.0px;width:1000.0px;height:621.0px;background:#fff"></div>
  <div class="a" style="left:232.0px;top:135.0px;width:2.0px;height:616.0px;background:#a4a8ae"></div>
  <div class="a" style="left:234.0px;top:135.0px;width:233.0px;height:1.0px;background:#9ca2aa"></div>
  <div class="a" style="left:466.0px;top:135.0px;width:1.5px;height:616.0px;background:#80868e"></div>
  <div class="a" style="left:470.0px;top:135.0px;width:3.0px;height:616.0px;background:#e8eaec"></div>
  <div class="a" style="left:473.0px;top:135.0px;width:2.5px;height:616.0px;background:#707880"></div>
  <div class="a" style="left:475.0px;top:135.0px;width:187.0px;height:1.0px;background:#9ca2aa"></div>
  <div class="a" style="left:661.0px;top:135.0px;width:1.5px;height:616.0px;background:#80868e"></div>
  <div class="a" style="left:665.0px;top:135.0px;width:3.5px;height:616.0px;background:#e8eaec"></div>
  <div class="a" style="left:668.5px;top:135.0px;width:2.5px;height:616.0px;background:#707880"></div>
  <div class="a" style="left:671.0px;top:135.0px;width:559.0px;height:1.0px;background:#9ca2aa"></div>
  <div class="a" style="left:645.0px;top:751.0px;width:585.0px;height:5.0px;background:#e2e2e2"></div>
  <div class="a" style="left:625.0px;top:751.0px;width:15.0px;height:5.0px;background:#f4f4f4;border:1px solid #ccc"></div>
  <div class="a" style="left:446.0px;top:751.0px;width:7.0px;height:5.0px;background:#f4f4f4;border:1px solid #ccc"></div>
  <div class="a" style="left:633.0px;top:752.0px;width:0;height:0;border-top:4px solid transparent;border-bottom:4px solid transparent;border-right:6px solid #555"></div>
  <div class="a" style="left:234.0px;top:136.0px;width:232px;height:614px;overflow:hidden">
  <div class="a" style="left:9.0px;top:37.6px;width:1.0px;height:518.5px;background:#c0c8e0"></div>
  <div class="a" style="left:32.3px;top:57.9px;width:1.0px;height:356.5px;background:#c0c8e0"></div>
  <div class="a" style="left:56.0px;top:59.9px;width:1.0px;height:314.0px;background:#c0c8e0"></div>
  <svg class="a" style="left:1.0px;top:1.4px" width="16" height="16"><use href="#c-house"/></svg>
  <div class="t" style="left:22.8px;top:2.9px;font-size:13px;color:#111;font-family:'Liberation Serif',serif;letter-spacing:1px">上海思管信息技术有限公司_plm50</div>
  <div class="a" style="left:5.8px;top:26.1px;width:7.0px;height:7.0px;border:2px solid #5a70a8;border-radius:50%;background:#fff"></div>
  <div class="a" style="left:8.5px;top:32.6px;width:1.5px;height:6.0px;background:#5a70a8"></div>
  <div class="a" style="left:12.8px;top:29.1px;width:8.5px;height:1.0px;background:#c0c8e0"></div>
  <svg class="a" style="left:23.0px;top:20.6px" width="18" height="18"><use href="#c-org"/></svg>
  <div class="t" style="left:47.0px;top:23.1px;font-size:13px;color:#111;font-family:'Liberation Serif',serif;letter-spacing:0.8px\">研发中心/01</div>
  <div class="a" style="left:28.8px;top:46.4px;width:7.0px;height:7.0px;border:2px solid #5a70a8;border-radius:50%;background:#fff"></div>
  <div class="a" style="left:31.5px;top:52.9px;width:1.5px;height:6.0px;background:#5a70a8"></div>
  <div class="a" style="left:35.8px;top:49.4px;width:8.5px;height:1.0px;background:#c0c8e0"></div>
  <svg class="a" style="left:47.0px;top:40.9px" width="18" height="18"><use href="#c-org"/></svg>
  <div class="t" style="left:69.5px;top:43.4px;font-size:13px;color:#111;font-family:'Liberation Serif',serif;letter-spacing:0.8px\">产品设计室/0101</div>
  <div class="a" style="left:57.0px;top:70.1px;width:11.0px;height:1.0px;background:#c0c8e0"></div>
  <svg class="a" style="left:70.0px;top:62.1px" width="13" height="16"><use href="#c-user"/></svg>
  <div class="t" style="left:93.7px;top:63.6px;font-size:13px;color:#111;font-family:'Liberation Serif',serif;letter-spacing:0.5px;word-spacing:-1px">Yiming ( Yiming )</div>
  <div class="a" style="left:57.0px;top:90.4px;width:11.0px;height:1.0px;background:#c0c8e0"></div>
  <svg class="a" style="left:70.0px;top:82.4px" width="13" height="16"><use href="#c-user"/></svg>
  <div class="t" style="left:93.7px;top:83.9px;font-size:13px;color:#111;font-family:'Liberation Serif',serif;letter-spacing:0.5px;word-spacing:-1px">鞠春雷 ( 鞠春雷 )</div>
  <div class="a" style="left:57.0px;top:110.6px;width:11.0px;height:1.0px;background:#c0c8e0"></div>
  <svg class="a" style="left:70.0px;top:102.6px" width="13" height="16"><use href="#c-user"/></svg>
  <div class="t" style="left:93.7px;top:104.1px;font-size:13px;color:#111;font-family:'Liberation Serif',serif;letter-spacing:0.5px;word-spacing:-1px">姜红 ( 姜红 )</div>
  <div class="a" style="left:57.0px;top:130.9px;width:11.0px;height:1.0px;background:#c0c8e0"></div>
  <svg class="a" style="left:70.0px;top:122.9px" width="13" height="16"><use href="#c-user"/></svg>
  <div class="t" style="left:93.7px;top:124.4px;font-size:13px;color:#111;font-family:'Liberation Serif',serif;letter-spacing:0.5px;word-spacing:-1px">Alex ( Alex )</div>
  <div class="a" style="left:57.0px;top:151.1px;width:11.0px;height:1.0px;background:#c0c8e0"></div>
  <svg class="a" style="left:70.0px;top:143.1px" width="13" height="16"><use href="#c-user"/></svg>
  <div class="t" style="left:93.7px;top:144.6px;font-size:13px;color:#111;font-family:'Liberation Serif',serif;letter-spacing:0.5px;word-spacing:-1px">季云飞 ( 季云飞 )</div>
  <div class="a" style="left:57.0px;top:171.4px;width:11.0px;height:1.0px;background:#c0c8e0"></div>
  <svg class="a" style="left:70.0px;top:163.4px" width="13" height="16"><use href="#c-user"/></svg>
  <div class="t" style="left:93.7px;top:164.9px;font-size:13px;color:#111;font-family:'Liberation Serif',serif;letter-spacing:0.5px;word-spacing:-1px">丁叶春 ( 丁叶春 )</div>
  <div class="a" style="left:57.0px;top:191.6px;width:11.0px;height:1.0px;background:#c0c8e0"></div>
  <svg class="a" style="left:70.0px;top:183.6px" width="13" height="16"><use href="#c-user"/></svg>
  <div class="t" style="left:93.7px;top:185.1px;font-size:13px;color:#111;font-family:'Liberation Serif',serif;letter-spacing:0.5px;word-spacing:-1px">Milo ( Milo )</div>
  <div class="a" style="left:57.0px;top:211.9px;width:11.0px;height:1.0px;background:#c0c8e0"></div>
  <svg class="a" style="left:70.0px;top:203.9px" width="13" height="16"><use href="#c-user"/></svg>
  <div class="t" style="left:93.7px;top:205.4px;font-size:13px;color:#111;font-family:'Liberation Serif',serif;letter-spacing:0.5px;word-spacing:-1px">唐志萍 ( 唐志萍 )</div>
  <div class="a" style="left:57.0px;top:232.1px;width:11.0px;height:1.0px;background:#c0c8e0"></div>
  <svg class="a" style="left:70.0px;top:224.1px" width="13" height="16"><use href="#c-user"/></svg>
  <div class="t" style="left:93.7px;top:225.6px;font-size:13px;color:#111;font-family:'Liberation Serif',serif;letter-spacing:0.5px;word-spacing:-1px">应思红 ( 应思红 )</div>
  <div class="a" style="left:57.0px;top:252.4px;width:11.0px;height:1.0px;background:#c0c8e0"></div>
  <svg class="a" style="left:70.0px;top:244.4px" width="13" height="16"><use href="#c-user"/></svg>
  <div class="t" style="left:93.7px;top:245.9px;font-size:13px;color:#111;font-family:'Liberation Serif',serif;letter-spacing:0.5px;word-spacing:-1px">马健 ( 马健 )</div>
  <div class="a" style="left:57.0px;top:272.6px;width:11.0px;height:1.0px;background:#c0c8e0"></div>
  <svg class="a" style="left:70.0px;top:264.6px" width="13" height="16"><use href="#c-user"/></svg>
  <div class="t" style="left:93.7px;top:266.1px;font-size:13px;color:#111;font-family:'Liberation Serif',serif;letter-spacing:0.5px;word-spacing:-1px">周文波 ( 周文波 )</div>
  <div class="a" style="left:57.0px;top:292.9px;width:11.0px;height:1.0px;background:#c0c8e0"></div>
  <svg class="a" style="left:70.0px;top:284.9px" width="13" height="16"><use href="#c-user"/></svg>
  <div class="t" style="left:93.7px;top:286.4px;font-size:13px;color:#111;font-family:'Liberation Serif',serif;letter-spacing:0.5px;word-spacing:-1px">王会政 ( 王会政 )</div>
  <div class="a" style="left:57.0px;top:313.1px;width:11.0px;height:1.0px;background:#c0c8e0"></div>
  <div class="a" style="left:92.0px;top:303.6px;width:109.0px;height:19.0px;background:#fce79a"></div>
  <svg class="a" style="left:70.0px;top:305.1px" width="13" height="16"><use href="#c-user"/></svg>
  <div class="t" style="left:93.7px;top:306.6px;font-size:13px;color:#111;font-family:'Liberation Serif',serif;letter-spacing:0.5px;word-spacing:-1px">石建军 ( 石建军 )</div>
  <div class="a" style="left:57.0px;top:333.4px;width:11.0px;height:1.0px;background:#c0c8e0"></div>
  <svg class="a" style="left:70.0px;top:325.4px" width="13" height="16"><use href="#c-user"/></svg>
  <div class="t" style="left:93.7px;top:326.9px;font-size:13px;color:#111;font-family:'Liberation Serif',serif;letter-spacing:0.5px;word-spacing:-1px">李华 ( 李华 )</div>
  <div class="a" style="left:57.0px;top:353.6px;width:11.0px;height:1.0px;background:#c0c8e0"></div>
  <svg class="a" style="left:70.0px;top:345.6px" width="13" height="16"><use href="#c-user"/></svg>
  <div class="t" style="left:93.7px;top:347.1px;font-size:13px;color:#111;font-family:'Liberation Serif',serif;letter-spacing:0.5px;word-spacing:-1px">曾艳 ( 曾艳 )</div>
  <div class="a" style="left:57.0px;top:373.9px;width:11.0px;height:1.0px;background:#c0c8e0"></div>
  <svg class="a" style="left:70.0px;top:365.9px" width="13" height="16"><use href="#c-user"/></svg>
  <div class="t" style="left:93.7px;top:367.4px;font-size:13px;color:#111;font-family:'Liberation Serif',serif;letter-spacing:0.5px;word-spacing:-1px">刘振新 ( 刘振新 )</div>
  <div class="a" style="left:30.5px;top:390.6px;width:7.0px;height:7.0px;border:2px solid #5a70a8;border-radius:50%;background:#fff"></div>
  <div class="a" style="left:37.0px;top:393.4px;width:7.0px;height:1.5px;background:#5a70a8"></div>
  <svg class="a" style="left:47.0px;top:385.1px" width="18" height="18"><use href="#c-org"/></svg>
  <div class="t" style="left:69.3px;top:387.6px;font-size:13px;color:#111;font-family:'Liberation Serif',serif;letter-spacing:0.8px\">工艺设计室/0102</div>
  <div class="a" style="left:30.5px;top:410.9px;width:7.0px;height:7.0px;border:2px solid #5a70a8;border-radius:50%;background:#fff"></div>
  <div class="a" style="left:37.0px;top:413.6px;width:7.0px;height:1.5px;background:#5a70a8"></div>
  <svg class="a" style="left:47.0px;top:405.4px" width="18" height="18"><use href="#c-org"/></svg>
  <div class="t" style="left:69.3px;top:407.9px;font-size:13px;color:#111;font-family:'Liberation Serif',serif;letter-spacing:0.8px\">档案室/0103</div>
  <div class="a" style="left:5.8px;top:431.1px;width:7.0px;height:7.0px;border:2px solid #5a70a8;border-radius:50%;background:#fff"></div>
  <div class="a" style="left:12.3px;top:433.9px;width:7.0px;height:1.5px;background:#5a70a8"></div>
  <svg class="a" style="left:23.0px;top:425.6px" width="18" height="18"><use href="#c-org"/></svg>
  <div class="t" style="left:46.0px;top:428.1px;font-size:13px;color:#111;font-family:'Liberation Serif',serif;letter-spacing:0.8px\">制造部/02</div>
  <div class="a" style="left:5.8px;top:451.4px;width:7.0px;height:7.0px;border:2px solid #5a70a8;border-radius:50%;background:#fff"></div>
  <div class="a" style="left:12.3px;top:454.1px;width:7.0px;height:1.5px;background:#5a70a8"></div>
  <svg class="a" style="left:23.0px;top:445.9px" width="18" height="18"><use href="#c-org"/></svg>
  <div class="t" style="left:46.0px;top:448.4px;font-size:13px;color:#111;font-family:'Liberation Serif',serif;letter-spacing:0.8px\">信息中心/03</div>
  <div class="a" style="left:5.8px;top:471.6px;width:7.0px;height:7.0px;border:2px solid #5a70a8;border-radius:50%;background:#fff"></div>
  <div class="a" style="left:12.3px;top:474.4px;width:7.0px;height:1.5px;background:#5a70a8"></div>
  <svg class="a" style="left:23.0px;top:466.1px" width="18" height="18"><use href="#c-org"/></svg>
  <div class="t" style="left:46.0px;top:468.6px;font-size:13px;color:#111;font-family:'Liberation Serif',serif;letter-spacing:0.8px\">物流中心/04</div>
  <div class="a" style="left:5.8px;top:491.9px;width:7.0px;height:7.0px;border:2px solid #5a70a8;border-radius:50%;background:#fff"></div>
  <div class="a" style="left:12.3px;top:494.6px;width:7.0px;height:1.5px;background:#5a70a8"></div>
  <svg class="a" style="left:23.0px;top:486.4px" width="18" height="18"><use href="#c-org"/></svg>
  <div class="t" style="left:46.0px;top:488.9px;font-size:13px;color:#111;font-family:'Liberation Serif',serif;letter-spacing:0.8px\">财务部/05</div>
  <div class="a" style="left:5.8px;top:512.1px;width:7.0px;height:7.0px;border:2px solid #5a70a8;border-radius:50%;background:#fff"></div>
  <div class="a" style="left:12.3px;top:514.9px;width:7.0px;height:1.5px;background:#5a70a8"></div>
  <svg class="a" style="left:23.0px;top:506.6px" width="18" height="18"><use href="#c-org"/></svg>
  <div class="t" style="left:46.0px;top:509.1px;font-size:13px;color:#111;font-family:'Liberation Serif',serif;letter-spacing:0.8px\">营销中心/06</div>
  <div class="a" style="left:5.8px;top:532.4px;width:7.0px;height:7.0px;border:2px solid #5a70a8;border-radius:50%;background:#fff"></div>
  <div class="a" style="left:12.3px;top:535.1px;width:7.0px;height:1.5px;background:#5a70a8"></div>
  <svg class="a" style="left:23.0px;top:526.9px" width="18" height="18"><use href="#c-org"/></svg>
  <div class="t" style="left:46.0px;top:529.4px;font-size:13px;color:#111;font-family:'Liberation Serif',serif;letter-spacing:0.8px\">山东思普/08</div>
  <div class="a" style="left:9.0px;top:556.1px;width:12.0px;height:1.0px;background:#c0c8e0"></div>
  <svg class="a" style="left:21.0px;top:548.1px" width="13" height="16"><use href="#c-user"/></svg>
  <div class="t" style="left:46.0px;top:549.6px;font-size:13px;color:#111;font-family:'Liberation Serif',serif;">adm</div>
  </div>
  <svg class="a" style="left:475.0px;top:138.0px" width="19" height="16"><use href="#c-folder"/></svg>
  <div class="t" style="left:499.0px;top:140.0px;font-size:13px;color:#111;letter-spacing:0.9px">任务进度_用户组织_用户</div>
  <div class="a" style="left:484.0px;top:157.0px;width:1.0px;height:30.0px;background:#c0c8e0"></div>
  <div class="a" style="left:521.5px;top:157.0px;width:47.0px;height:19.5px;background:#f8e28e;border:1px solid #7a88a8"></div>
  <div class="a" style="left:480.8px;top:163.3px;width:7.0px;height:7.0px;border:2px solid #5a70a8;border-radius:50%;background:#fff"></div>
  <div class="a" style="left:487.3px;top:166.1px;width:7.0px;height:1.5px;background:#5a70a8"></div>
  <svg class="a" style="left:499.0px;top:158.8px" width="19" height="16"><use href="#c-folder"/></svg>
  <div class="t" style="left:523.0px;top:159.8px;font-size:14px;color:#111;letter-spacing:0.5px">未完成</div>
  <div class="a" style="left:480.8px;top:183.5px;width:7.0px;height:7.0px;border:2px solid #5a70a8;border-radius:50%;background:#fff"></div>
  <div class="a" style="left:487.3px;top:186.2px;width:7.0px;height:1.5px;background:#5a70a8"></div>
  <svg class="a" style="left:499.0px;top:179.0px" width="19" height="16"><use href="#c-folder"/></svg>
  <div class="t" style="left:523.0px;top:180.0px;font-size:14px;color:#111;letter-spacing:0.5px">已完成</div>
  <div class="a" style="left:671.0px;top:135.5px;width:527.0px;height:23.0px;background:#fff;border:1px solid #a0a6ae;border-top:2px solid #8c9298"></div>
  <div class="a" style="left:1201.0px;top:135.5px;width:39.0px;height:23.0px;background:linear-gradient(#eef3f8,#cfdbe6);border:1px solid #9aa8b8;border-top:2px solid #8c9298"></div>
  <div class="t" style="left:1207.0px;top:140.0px;font-size:14px;color:#222;">查找</div>
  <div class="a" style="left:671.0px;top:161.0px;width:559.0px;height:20.0px;background:#ebebeb;border-top:1px solid #c8c8c8;border-bottom:2px solid #b8bec6"></div>
  <div class="a" style="left:878.5px;top:162.0px;width:2.0px;height:18.0px;background:#c4c8ce"></div>
  <div class="t" style="left:671.0px;top:164.0px;width:208.5px;text-align:center;font-size:14px;color:#333">名称</div>
  <div class="a" style="left:924.6px;top:162.0px;width:2.0px;height:18.0px;background:#c4c8ce"></div>
  <div class="t" style="left:879.5px;top:164.0px;width:46.1px;text-align:center;font-size:14px;color:#333">序号</div>
  <div class="a" style="left:1018.0px;top:162.0px;width:2.0px;height:18.0px;background:#c4c8ce"></div>
  <div class="t" style="left:925.6px;top:164.0px;width:93.4px;text-align:center;font-size:14px;color:#333">进度状态</div>
  <div class="a" style="left:1112.0px;top:162.0px;width:2.0px;height:18.0px;background:#c4c8ce"></div>
  <div class="t" style="left:1019.0px;top:164.0px;width:94.0px;text-align:center;font-size:14px;color:#333">工期</div>
  <div class="a" style="left:1249.0px;top:162.0px;width:2.0px;height:18.0px;background:#c4c8ce"></div>
  <div class="t" style="left:1143.0px;top:164.0px;font-size:14px;color:#333;">实际开始时间</div>
  <div class="a" style="left:1223.0px;top:181.0px;width:2.0px;height:570.0px;background:#a8b4c8"></div>
  <div class="a" style="left:671.0px;top:182.0px;width:552px;height:568px;overflow:hidden">
  <div class="a" style="left:8.0px;top:10.0px;width:1.0px;height:563.0px;background:#c4cce4"></div>
  <div class="a" style="left:5.7px;top:6.3px;width:8.0px;height:8.0px;border:2px solid #5a70a8;border-radius:50%;background:#fff"></div>
  <div class="a" style="left:13.5px;top:9.3px;width:5.5px;height:2.0px;background:#5a70a8"></div>
  <svg class="a" style="left:24.0px;top:2.3px" width="20" height="16"><use href="#c-tfolder"/></svg>
  <div class="t" style="left:48.7px;top:3.6px;font-size:13.5px;color:#111;letter-spacing:0.4px">设计输入</div>
  <div class="t" style="left:208.5px;top:2.8px;width:46px;text-align:center;font-size:15px;color:#111">1</div>
  <svg class="a" style="left:257.0px;top:2.3px" width="16" height="16"><circle cx="8" cy="8" r="7" fill="url(#gGreen)" stroke="#bcc4bc" stroke-width="1.6"/></svg>
  <div class="t" style="left:276.5px;top:3.6px;font-size:13.5px;color:#000;-webkit-text-stroke:0.25px #000">正常</div>
  <div class="t" style="left:457.7px;top:3.3px;font-size:14px;color:#111;letter-spacing:0.25px">2011-12-16 11</div>
  <div class="a" style="left:5.7px;top:28.7px;width:8.0px;height:8.0px;border:2px solid #5a70a8;border-radius:50%;background:#fff"></div>
  <div class="a" style="left:13.5px;top:31.8px;width:5.5px;height:2.0px;background:#5a70a8"></div>
  <svg class="a" style="left:24.0px;top:24.8px" width="20" height="16"><use href="#c-tfolder"/></svg>
  <div class="t" style="left:48.7px;top:26.0px;font-size:13.5px;color:#111;letter-spacing:0.4px">立项</div>
  <div class="t" style="left:208.5px;top:25.2px;width:46px;text-align:center;font-size:15px;color:#111">2</div>
  <svg class="a" style="left:257.0px;top:24.8px" width="16" height="16"><circle cx="8" cy="8" r="7" fill="url(#gRed)" stroke="#bcc4bc" stroke-width="1.6"/></svg>
  <div class="t" style="left:276.5px;top:26.0px;font-size:13.5px;color:#000;-webkit-text-stroke:0.25px #000">逾期</div>
  <div class="a" style="left:349.0px;top:23.8px;width:93px;height:18px;overflow:hidden"><div class="t" style="right:-8px;top:1.5px;font-size:15px;color:#111">1.00</div></div>
  <div class="t" style="left:457.7px;top:25.7px;font-size:14px;color:#111;letter-spacing:0.25px">2011-11-20 17</div>
  <div class="a" style="left:5.7px;top:51.2px;width:8.0px;height:8.0px;border:2px solid #5a70a8;border-radius:50%;background:#fff"></div>
  <div class="a" style="left:13.5px;top:54.1px;width:5.5px;height:2.0px;background:#5a70a8"></div>
  <svg class="a" style="left:24.0px;top:47.2px" width="20" height="16"><use href="#c-tfolder"/></svg>
  <div class="t" style="left:48.7px;top:48.4px;font-size:13.5px;color:#111;letter-spacing:0.4px">设计更改(石建军)</div>
  <div class="t" style="left:208.5px;top:47.7px;width:46px;text-align:center;font-size:15px;color:#111">3</div>
  <svg class="a" style="left:257.0px;top:47.2px" width="16" height="16"><circle cx="8" cy="8" r="7" fill="url(#gGreen)" stroke="#bcc4bc" stroke-width="1.6"/></svg>
  <div class="t" style="left:276.5px;top:48.4px;font-size:13.5px;color:#000;-webkit-text-stroke:0.25px #000">正常</div>
  <div class="t" style="left:457.7px;top:48.2px;font-size:14px;color:#111;letter-spacing:0.25px">2011-11-03 13</div>
  <div class="a" style="left:5.7px;top:73.6px;width:8.0px;height:8.0px;border:2px solid #5a70a8;border-radius:50%;background:#fff"></div>
  <div class="a" style="left:13.5px;top:76.7px;width:5.5px;height:2.0px;background:#5a70a8"></div>
  <svg class="a" style="left:24.0px;top:69.6px" width="20" height="16"><use href="#c-tfolder"/></svg>
  <div class="t" style="left:48.7px;top:70.9px;font-size:13.5px;color:#111;letter-spacing:0.4px">设计更改</div>
  <div class="t" style="left:208.5px;top:70.1px;width:46px;text-align:center;font-size:15px;color:#111">4</div>
  <svg class="a" style="left:257.0px;top:69.6px" width="16" height="16"><circle cx="8" cy="8" r="7" fill="url(#gGreen)" stroke="#bcc4bc" stroke-width="1.6"/></svg>
  <div class="t" style="left:276.5px;top:70.9px;font-size:13.5px;color:#000;-webkit-text-stroke:0.25px #000">正常</div>
  <div class="t" style="left:457.7px;top:70.6px;font-size:14px;color:#111;letter-spacing:0.25px">2011-11-03 13</div>
  <div class="a" style="left:5.7px;top:96.1px;width:8.0px;height:8.0px;border:2px solid #5a70a8;border-radius:50%;background:#fff"></div>
  <div class="a" style="left:13.5px;top:99.2px;width:5.5px;height:2.0px;background:#5a70a8"></div>
  <svg class="a" style="left:24.0px;top:92.1px" width="20" height="16"><use href="#c-tfolder"/></svg>
  <div class="t" style="left:48.7px;top:93.4px;font-size:13.5px;color:#111;letter-spacing:0.4px">设计方案评审</div>
  <div class="t" style="left:208.5px;top:92.6px;width:46px;text-align:center;font-size:15px;color:#111">5</div>
  <svg class="a" style="left:257.0px;top:92.1px" width="16" height="16"><circle cx="8" cy="8" r="7" fill="url(#gRed)" stroke="#bcc4bc" stroke-width="1.6"/></svg>
  <div class="t" style="left:276.5px;top:93.4px;font-size:13.5px;color:#000;-webkit-text-stroke:0.25px #000">逾期</div>
  <div class="a" style="left:349.0px;top:91.1px;width:93px;height:18px;overflow:hidden"><div class="t" style="right:-8px;top:1.5px;font-size:15px;color:#111">2.00</div></div>
  <div class="t" style="left:457.7px;top:93.1px;font-size:14px;color:#111;letter-spacing:0.25px">2011-11-01 10</div>
  <div class="a" style="left:5.7px;top:118.6px;width:8.0px;height:8.0px;border:2px solid #5a70a8;border-radius:50%;background:#fff"></div>
  <div class="a" style="left:13.5px;top:121.5px;width:5.5px;height:2.0px;background:#5a70a8"></div>
  <svg class="a" style="left:24.0px;top:114.6px" width="20" height="16"><use href="#c-tfolder"/></svg>
  <div class="t" style="left:48.7px;top:115.8px;font-size:13.5px;color:#111;letter-spacing:0.4px">产品设计方案报告</div>
  <div class="t" style="left:208.5px;top:115.1px;width:46px;text-align:center;font-size:15px;color:#111">6</div>
  <svg class="a" style="left:257.0px;top:114.6px" width="16" height="16"><circle cx="8" cy="8" r="7" fill="url(#gRed)" stroke="#bcc4bc" stroke-width="1.6"/></svg>
  <div class="t" style="left:276.5px;top:115.8px;font-size:13.5px;color:#000;-webkit-text-stroke:0.25px #000">逾期</div>
  <div class="a" style="left:349.0px;top:113.6px;width:93px;height:18px;overflow:hidden"><div class="t" style="right:-8px;top:1.5px;font-size:15px;color:#111">10.00</div></div>
  <div class="t" style="left:457.7px;top:115.6px;font-size:14px;color:#111;letter-spacing:0.25px">2011-11-01 10</div>
  <div class="a" style="left:5.7px;top:141.0px;width:8.0px;height:8.0px;border:2px solid #5a70a8;border-radius:50%;background:#fff"></div>
  <div class="a" style="left:13.5px;top:143.9px;width:5.5px;height:2.0px;background:#5a70a8"></div>
  <svg class="a" style="left:24.0px;top:137.0px" width="20" height="16"><use href="#c-tfolder"/></svg>
  <div class="t" style="left:48.7px;top:138.2px;font-size:13.5px;color:#111;letter-spacing:0.4px">项目计划</div>
  <div class="t" style="left:208.5px;top:137.5px;width:46px;text-align:center;font-size:15px;color:#111">7</div>
  <svg class="a" style="left:257.0px;top:137.0px" width="16" height="16"><circle cx="8" cy="8" r="7" fill="url(#gRed)" stroke="#bcc4bc" stroke-width="1.6"/></svg>
  <div class="t" style="left:276.5px;top:138.2px;font-size:13.5px;color:#000;-webkit-text-stroke:0.25px #000">逾期</div>
  <div class="a" style="left:349.0px;top:136.0px;width:93px;height:18px;overflow:hidden"><div class="t" style="right:-8px;top:1.5px;font-size:15px;color:#111">2.00</div></div>
  <div class="t" style="left:457.7px;top:138.0px;font-size:14px;color:#111;letter-spacing:0.25px">2011-11-01 10</div>
  <div class="a" style="left:5.7px;top:163.5px;width:8.0px;height:8.0px;border:2px solid #5a70a8;border-radius:50%;background:#fff"></div>
  <div class="a" style="left:13.5px;top:166.4px;width:5.5px;height:2.0px;background:#5a70a8"></div>
  <svg class="a" style="left:24.0px;top:159.5px" width="20" height="16"><use href="#c-tfolder"/></svg>
  <div class="t" style="left:48.7px;top:160.7px;font-size:13.5px;color:#111;letter-spacing:0.4px">明细表(MX)</div>
  <div class="t" style="left:208.5px;top:160.0px;width:46px;text-align:center;font-size:15px;color:#111">8</div>
  <svg class="a" style="left:257.0px;top:159.5px" width="16" height="16"><circle cx="8" cy="8" r="7" fill="url(#gRed)" stroke="#bcc4bc" stroke-width="1.6"/></svg>
  <div class="t" style="left:276.5px;top:160.7px;font-size:13.5px;color:#000;-webkit-text-stroke:0.25px #000">逾期</div>
  <div class="a" style="left:349.0px;top:158.5px;width:93px;height:18px;overflow:hidden"><div class="t" style="right:-8px;top:1.5px;font-size:15px;color:#111">4.00</div></div>
  <div class="t" style="left:457.7px;top:160.5px;font-size:14px;color:#111;letter-spacing:0.25px">2011-10-31 11</div>
  <div class="a" style="left:5.7px;top:185.9px;width:8.0px;height:8.0px;border:2px solid #5a70a8;border-radius:50%;background:#fff"></div>
  <div class="a" style="left:13.5px;top:188.8px;width:5.5px;height:2.0px;background:#5a70a8"></div>
  <svg class="a" style="left:24.0px;top:181.9px" width="20" height="16"><use href="#c-tfolder"/></svg>
  <div class="t" style="left:48.7px;top:183.1px;font-size:13.5px;color:#111;letter-spacing:0.4px">图样目录</div>
  <div class="t" style="left:208.5px;top:182.4px;width:46px;text-align:center;font-size:15px;color:#111">9</div>
  <svg class="a" style="left:257.0px;top:181.9px" width="16" height="16"><circle cx="8" cy="8" r="7" fill="url(#gRed)" stroke="#bcc4bc" stroke-width="1.6"/></svg>
  <div class="t" style="left:276.5px;top:183.1px;font-size:13.5px;color:#000;-webkit-text-stroke:0.25px #000">逾期</div>
  <div class="a" style="left:349.0px;top:180.9px;width:93px;height:18px;overflow:hidden"><div class="t" style="right:-8px;top:1.5px;font-size:15px;color:#111">2.00</div></div>
  <div class="t" style="left:457.7px;top:182.9px;font-size:14px;color:#111;letter-spacing:0.25px">2011-10-31 11</div>
  <div class="a" style="left:5.7px;top:208.4px;width:8.0px;height:8.0px;border:2px solid #5a70a8;border-radius:50%;background:#fff"></div>
  <div class="a" style="left:13.5px;top:211.3px;width:5.5px;height:2.0px;background:#5a70a8"></div>
  <svg class="a" style="left:24.0px;top:204.4px" width="20" height="16"><use href="#c-tfolder"/></svg>
  <div class="t" style="left:48.7px;top:205.6px;font-size:13.5px;color:#111;letter-spacing:0.4px">封面设计</div>
  <div class="t" style="left:208.5px;top:204.9px;width:46px;text-align:center;font-size:15px;color:#111">10</div>
  <svg class="a" style="left:257.0px;top:204.4px" width="16" height="16"><circle cx="8" cy="8" r="7" fill="url(#gRed)" stroke="#bcc4bc" stroke-width="1.6"/></svg>
  <div class="t" style="left:276.5px;top:205.6px;font-size:13.5px;color:#000;-webkit-text-stroke:0.25px #000">逾期</div>
  <div class="a" style="left:349.0px;top:203.4px;width:93px;height:18px;overflow:hidden"><div class="t" style="right:-8px;top:1.5px;font-size:15px;color:#111">2.00</div></div>
  <div class="t" style="left:457.7px;top:205.4px;font-size:14px;color:#111;letter-spacing:0.25px">2011-10-31 11</div>
  <div class="a" style="left:5.7px;top:230.8px;width:8.0px;height:8.0px;border:2px solid #5a70a8;border-radius:50%;background:#fff"></div>
  <div class="a" style="left:13.5px;top:233.8px;width:5.5px;height:2.0px;background:#5a70a8"></div>
  <svg class="a" style="left:24.0px;top:226.8px" width="20" height="16"><use href="#c-tfolder"/></svg>
  <div class="t" style="left:48.7px;top:228.0px;font-size:13.5px;color:#111;letter-spacing:0.4px">设计方案评审</div>
  <div class="t" style="left:208.5px;top:227.3px;width:46px;text-align:center;font-size:15px;color:#111">11</div>
  <svg class="a" style="left:257.0px;top:226.8px" width="16" height="16"><circle cx="8" cy="8" r="7" fill="url(#gRed)" stroke="#bcc4bc" stroke-width="1.6"/></svg>
  <div class="t" style="left:276.5px;top:228.0px;font-size:13.5px;color:#000;-webkit-text-stroke:0.25px #000">逾期</div>
  <div class="a" style="left:349.0px;top:225.8px;width:93px;height:18px;overflow:hidden"><div class="t" style="right:-8px;top:1.5px;font-size:15px;color:#111">2.00</div></div>
  <div class="t" style="left:457.7px;top:227.8px;font-size:14px;color:#111;letter-spacing:0.25px">2011-10-31 11</div>
  <div class="a" style="left:5.7px;top:253.3px;width:8.0px;height:8.0px;border:2px solid #5a70a8;border-radius:50%;background:#fff"></div>
  <div class="a" style="left:13.5px;top:256.2px;width:5.5px;height:2.0px;background:#5a70a8"></div>
  <svg class="a" style="left:24.0px;top:249.2px" width="20" height="16"><use href="#c-tfolder"/></svg>
  <div class="t" style="left:48.7px;top:250.5px;font-size:13.5px;color:#111;letter-spacing:0.4px">产品设计方案报告(FA)</div>
  <div class="t" style="left:208.5px;top:249.8px;width:46px;text-align:center;font-size:15px;color:#111">12</div>
  <svg class="a" style="left:257.0px;top:249.2px" width="16" height="16"><circle cx="8" cy="8" r="7" fill="url(#gRed)" stroke="#bcc4bc" stroke-width="1.6"/></svg>
  <div class="t" style="left:276.5px;top:250.5px;font-size:13.5px;color:#000;-webkit-text-stroke:0.25px #000">逾期</div>
  <div class="a" style="left:349.0px;top:248.2px;width:93px;height:18px;overflow:hidden"><div class="t" style="right:-8px;top:1.5px;font-size:15px;color:#111">8.00</div></div>
  <div class="t" style="left:457.7px;top:250.3px;font-size:14px;color:#111;letter-spacing:0.25px">2011-10-31 11</div>
  <div class="a" style="left:5.7px;top:275.7px;width:8.0px;height:8.0px;border:2px solid #5a70a8;border-radius:50%;background:#fff"></div>
  <div class="a" style="left:13.5px;top:278.8px;width:5.5px;height:2.0px;background:#5a70a8"></div>
  <svg class="a" style="left:24.0px;top:271.7px" width="20" height="16"><use href="#c-tfolder"/></svg>
  <div class="t" style="left:48.7px;top:273.0px;font-size:13.5px;color:#111;letter-spacing:0.4px">项目计划(JH)</div>
  <div class="t" style="left:208.5px;top:272.2px;width:46px;text-align:center;font-size:15px;color:#111">13</div>
  <svg class="a" style="left:257.0px;top:271.7px" width="16" height="16"><circle cx="8" cy="8" r="7" fill="url(#gRed)" stroke="#bcc4bc" stroke-width="1.6"/></svg>
  <div class="t" style="left:276.5px;top:273.0px;font-size:13.5px;color:#000;-webkit-text-stroke:0.25px #000">逾期</div>
  <div class="a" style="left:349.0px;top:270.7px;width:93px;height:18px;overflow:hidden"><div class="t" style="right:-8px;top:1.5px;font-size:15px;color:#111">2.00</div></div>
  <div class="t" style="left:457.7px;top:272.7px;font-size:14px;color:#111;letter-spacing:0.25px">2011-10-31 11</div>
  <div class="a" style="left:5.7px;top:298.1px;width:8.0px;height:8.0px;border:2px solid #5a70a8;border-radius:50%;background:#fff"></div>
  <div class="a" style="left:13.5px;top:301.1px;width:5.5px;height:2.0px;background:#5a70a8"></div>
  <svg class="a" style="left:24.0px;top:294.1px" width="20" height="16"><use href="#c-tfolder"/></svg>
  <div class="t" style="left:48.7px;top:295.4px;font-size:13.5px;color:#111;letter-spacing:0.4px">设计任务书(SJ4.0RW)</div>
  <div class="t" style="left:208.5px;top:294.6px;width:46px;text-align:center;font-size:15px;color:#111">14</div>
  <svg class="a" style="left:257.0px;top:294.1px" width="16" height="16"><circle cx="8" cy="8" r="7" fill="url(#gRed)" stroke="#bcc4bc" stroke-width="1.6"/></svg>
  <div class="t" style="left:276.5px;top:295.4px;font-size:13.5px;color:#000;-webkit-text-stroke:0.25px #000">逾期</div>
  <div class="a" style="left:349.0px;top:293.1px;width:93px;height:18px;overflow:hidden"><div class="t" style="right:-8px;top:1.5px;font-size:15px;color:#111">3.00</div></div>
  <div class="t" style="left:457.7px;top:295.1px;font-size:14px;color:#111;letter-spacing:0.25px">2011-10-31 11</div>
  <div class="a" style="left:5.7px;top:320.6px;width:8.0px;height:8.0px;border:2px solid #5a70a8;border-radius:50%;background:#fff"></div>
  <div class="a" style="left:13.5px;top:323.6px;width:5.5px;height:2.0px;background:#5a70a8"></div>
  <svg class="a" style="left:24.0px;top:316.6px" width="20" height="16"><use href="#c-tfolder"/></svg>
  <div class="t" style="left:48.7px;top:317.9px;font-size:13.5px;color:#111;letter-spacing:0.4px">产品图样设计</div>
  <div class="t" style="left:208.5px;top:317.1px;width:46px;text-align:center;font-size:15px;color:#111">15</div>
  <svg class="a" style="left:257.0px;top:316.6px" width="16" height="16"><circle cx="8" cy="8" r="7" fill="url(#gRed)" stroke="#bcc4bc" stroke-width="1.6"/></svg>
  <div class="t" style="left:276.5px;top:317.9px;font-size:13.5px;color:#000;-webkit-text-stroke:0.25px #000">逾期</div>
  <div class="a" style="left:349.0px;top:315.6px;width:93px;height:18px;overflow:hidden"><div class="t" style="right:-8px;top:1.5px;font-size:15px;color:#111">5.00</div></div>
  <div class="t" style="left:457.7px;top:317.6px;font-size:14px;color:#111;letter-spacing:0.25px">2011-07-15 18</div>
  <div class="a" style="left:5.7px;top:343.0px;width:8.0px;height:8.0px;border:2px solid #5a70a8;border-radius:50%;background:#fff"></div>
  <div class="a" style="left:13.5px;top:346.1px;width:5.5px;height:2.0px;background:#5a70a8"></div>
  <svg class="a" style="left:24.0px;top:339.0px" width="20" height="16"><use href="#c-tfolder"/></svg>
  <div class="t" style="left:48.7px;top:340.3px;font-size:13.5px;color:#111;letter-spacing:0.4px">产品论证报告</div>
  <div class="t" style="left:208.5px;top:339.5px;width:46px;text-align:center;font-size:15px;color:#111">16</div>
  <svg class="a" style="left:257.0px;top:339.0px" width="16" height="16"><circle cx="8" cy="8" r="7" fill="url(#gRed)" stroke="#bcc4bc" stroke-width="1.6"/></svg>
  <div class="t" style="left:276.5px;top:340.3px;font-size:13.5px;color:#000;-webkit-text-stroke:0.25px #000">逾期</div>
  <div class="a" style="left:349.0px;top:338.0px;width:93px;height:18px;overflow:hidden"><div class="t" style="right:-8px;top:1.5px;font-size:15px;color:#111">2.00</div></div>
  <div class="t" style="left:457.7px;top:340.0px;font-size:14px;color:#111;letter-spacing:0.25px">2011-07-15 18</div>
  <div class="a" style="left:5.7px;top:365.5px;width:8.0px;height:8.0px;border:2px solid #5a70a8;border-radius:50%;background:#fff"></div>
  <div class="a" style="left:13.5px;top:368.6px;width:5.5px;height:2.0px;background:#5a70a8"></div>
  <svg class="a" style="left:24.0px;top:361.5px" width="20" height="16"><use href="#c-tfolder"/></svg>
  <div class="t" style="left:48.7px;top:362.8px;font-size:13.5px;color:#111;letter-spacing:0.4px">产品评审</div>
  <div class="t" style="left:208.5px;top:362.0px;width:46px;text-align:center;font-size:15px;color:#111">17</div>
  <svg class="a" style="left:257.0px;top:361.5px" width="16" height="16"><circle cx="8" cy="8" r="7" fill="url(#gGreen)" stroke="#bcc4bc" stroke-width="1.6"/></svg>
  <div class="t" style="left:276.5px;top:362.8px;font-size:13.5px;color:#000;-webkit-text-stroke:0.25px #000">正常</div>
  <div class="a" style="left:349.0px;top:360.5px;width:93px;height:18px;overflow:hidden"><div class="t" style="right:-8px;top:1.5px;font-size:15px;color:#111">100.00</div></div>
  <div class="a" style="left:5.7px;top:388.0px;width:8.0px;height:8.0px;border:2px solid #5a70a8;border-radius:50%;background:#fff"></div>
  <div class="a" style="left:13.5px;top:390.9px;width:5.5px;height:2.0px;background:#5a70a8"></div>
  <svg class="a" style="left:24.0px;top:384.0px" width="20" height="16"><use href="#c-tfolder"/></svg>
  <div class="t" style="left:48.7px;top:385.2px;font-size:13.5px;color:#111;letter-spacing:0.4px">产品评审</div>
  <div class="t" style="left:208.5px;top:384.5px;width:46px;text-align:center;font-size:15px;color:#111">18</div>
  <svg class="a" style="left:257.0px;top:384.0px" width="16" height="16"><circle cx="8" cy="8" r="7" fill="url(#gRed)" stroke="#bcc4bc" stroke-width="1.6"/></svg>
  <div class="t" style="left:276.5px;top:385.2px;font-size:13.5px;color:#000;-webkit-text-stroke:0.25px #000">逾期</div>
  <div class="a" style="left:349.0px;top:383.0px;width:93px;height:18px;overflow:hidden"><div class="t" style="right:-8px;top:1.5px;font-size:15px;color:#111">20.00</div></div>
  <div class="a" style="left:5.7px;top:410.4px;width:8.0px;height:8.0px;border:2px solid #5a70a8;border-radius:50%;background:#fff"></div>
  <div class="a" style="left:13.5px;top:413.4px;width:5.5px;height:2.0px;background:#5a70a8"></div>
  <svg class="a" style="left:24.0px;top:406.4px" width="20" height="16"><use href="#c-tfolder"/></svg>
  <div class="t" style="left:48.7px;top:407.6px;font-size:13.5px;color:#111;letter-spacing:0.4px">项目立项书</div>
  <div class="t" style="left:208.5px;top:406.9px;width:46px;text-align:center;font-size:15px;color:#111">19</div>
  <svg class="a" style="left:257.0px;top:406.4px" width="16" height="16"><circle cx="8" cy="8" r="7" fill="url(#gRed)" stroke="#bcc4bc" stroke-width="1.6"/></svg>
  <div class="t" style="left:276.5px;top:407.6px;font-size:13.5px;color:#000;-webkit-text-stroke:0.25px #000">逾期</div>
  <div class="a" style="left:349.0px;top:405.4px;width:93px;height:18px;overflow:hidden"><div class="t" style="right:-8px;top:1.5px;font-size:15px;color:#111">19.00</div></div>
  <div class="t" style="left:457.7px;top:407.4px;font-size:14px;color:#111;letter-spacing:0.25px">2011-03-01 10</div>
  <div class="a" style="left:5.7px;top:432.9px;width:8.0px;height:8.0px;border:2px solid #5a70a8;border-radius:50%;background:#fff"></div>
  <div class="a" style="left:13.5px;top:435.9px;width:5.5px;height:2.0px;background:#5a70a8"></div>
  <svg class="a" style="left:24.0px;top:428.9px" width="20" height="16"><use href="#c-tfolder"/></svg>
  <div class="t" style="left:48.7px;top:430.1px;font-size:13.5px;color:#111;letter-spacing:0.4px">项目任务书</div>
  <div class="t" style="left:208.5px;top:429.4px;width:46px;text-align:center;font-size:15px;color:#111">20</div>
  <svg class="a" style="left:257.0px;top:428.9px" width="16" height="16"><circle cx="8" cy="8" r="7" fill="url(#gRed)" stroke="#bcc4bc" stroke-width="1.6"/></svg>
  <div class="t" style="left:276.5px;top:430.1px;font-size:13.5px;color:#000;-webkit-text-stroke:0.25px #000">逾期</div>
  <div class="a" style="left:349.0px;top:427.9px;width:93px;height:18px;overflow:hidden"><div class="t" style="right:-8px;top:1.5px;font-size:15px;color:#111">19.00</div></div>
  <div class="t" style="left:457.7px;top:429.9px;font-size:14px;color:#111;letter-spacing:0.25px">2011-03-09 11</div>
  <div class="a" style="left:5.7px;top:455.3px;width:8.0px;height:8.0px;border:2px solid #5a70a8;border-radius:50%;background:#fff"></div>
  <div class="a" style="left:13.5px;top:458.2px;width:5.5px;height:2.0px;background:#5a70a8"></div>
  <svg class="a" style="left:24.0px;top:451.3px" width="20" height="16"><use href="#c-tfolder"/></svg>
  <div class="t" style="left:48.7px;top:452.5px;font-size:13.5px;color:#111;letter-spacing:0.4px">产品论证报告</div>
  <div class="t" style="left:208.5px;top:451.8px;width:46px;text-align:center;font-size:15px;color:#111">21</div>
  <svg class="a" style="left:257.0px;top:451.3px" width="16" height="16"><circle cx="8" cy="8" r="7" fill="url(#gRed)" stroke="#bcc4bc" stroke-width="1.6"/></svg>
  <div class="t" style="left:276.5px;top:452.5px;font-size:13.5px;color:#000;-webkit-text-stroke:0.25px #000">逾期</div>
  <div class="a" style="left:349.0px;top:450.3px;width:93px;height:18px;overflow:hidden"><div class="t" style="right:-8px;top:1.5px;font-size:15px;color:#111">80.00</div></div>
  <div class="t" style="left:457.7px;top:452.3px;font-size:14px;color:#111;letter-spacing:0.25px">2011-02-19 12</div>
  <div class="a" style="left:5.7px;top:477.7px;width:8.0px;height:8.0px;border:2px solid #5a70a8;border-radius:50%;background:#fff"></div>
  <div class="a" style="left:13.5px;top:480.8px;width:5.5px;height:2.0px;background:#5a70a8"></div>
  <svg class="a" style="left:24.0px;top:473.8px" width="20" height="16"><use href="#c-tfolder"/></svg>
  <div class="t" style="left:48.7px;top:475.0px;font-size:13.5px;color:#111;letter-spacing:0.4px">产品顾客需求说明书设计</div>
  <div class="t" style="left:208.5px;top:474.2px;width:46px;text-align:center;font-size:15px;color:#111">22</div>
  <svg class="a" style="left:257.0px;top:473.8px" width="16" height="16"><circle cx="8" cy="8" r="7" fill="url(#gRed)" stroke="#bcc4bc" stroke-width="1.6"/></svg>
  <div class="t" style="left:276.5px;top:475.0px;font-size:13.5px;color:#000;-webkit-text-stroke:0.25px #000">逾期</div>
  <div class="a" style="left:349.0px;top:472.8px;width:93px;height:18px;overflow:hidden"><div class="t" style="right:-8px;top:1.5px;font-size:15px;color:#111">50.00</div></div>
  <div class="t" style="left:457.7px;top:474.7px;font-size:14px;color:#111;letter-spacing:0.25px">2011-02-19 12</div>
  <div class="a" style="left:5.7px;top:500.2px;width:8.0px;height:8.0px;border:2px solid #5a70a8;border-radius:50%;background:#fff"></div>
  <div class="a" style="left:13.5px;top:503.2px;width:5.5px;height:2.0px;background:#5a70a8"></div>
  <svg class="a" style="left:24.0px;top:496.2px" width="20" height="16"><use href="#c-tfolder"/></svg>
  <div class="t" style="left:48.7px;top:497.5px;font-size:13.5px;color:#111;letter-spacing:0.4px">结构和力学分析</div>
  <div class="t" style="left:208.5px;top:496.7px;width:46px;text-align:center;font-size:15px;color:#111">23</div>
  <svg class="a" style="left:257.0px;top:496.2px" width="16" height="16"><circle cx="8" cy="8" r="7" fill="url(#gRed)" stroke="#bcc4bc" stroke-width="1.6"/></svg>
  <div class="t" style="left:276.5px;top:497.5px;font-size:13.5px;color:#000;-webkit-text-stroke:0.25px #000">逾期</div>
  <div class="a" style="left:349.0px;top:495.2px;width:93px;height:18px;overflow:hidden"><div class="t" style="right:-8px;top:1.5px;font-size:15px;color:#111">100.00</div></div>
  <div class="t" style="left:457.7px;top:497.2px;font-size:14px;color:#111;letter-spacing:0.25px">2011-02-19 12</div>
  <div class="a" style="left:5.7px;top:522.7px;width:8.0px;height:8.0px;border:2px solid #5a70a8;border-radius:50%;background:#fff"></div>
  <div class="a" style="left:13.5px;top:525.6px;width:5.5px;height:2.0px;background:#5a70a8"></div>
  <svg class="a" style="left:24.0px;top:518.7px" width="20" height="16"><use href="#c-tfolder"/></svg>
  <div class="t" style="left:48.7px;top:519.9px;font-size:13.5px;color:#111;letter-spacing:0.4px">产品评审</div>
  <div class="t" style="left:208.5px;top:519.2px;width:46px;text-align:center;font-size:15px;color:#111">24</div>
  <svg class="a" style="left:257.0px;top:518.7px" width="16" height="16"><circle cx="8" cy="8" r="7" fill="url(#gRed)" stroke="#bcc4bc" stroke-width="1.6"/></svg>
  <div class="t" style="left:276.5px;top:519.9px;font-size:13.5px;color:#000;-webkit-text-stroke:0.25px #000">逾期</div>
  <div class="a" style="left:349.0px;top:517.7px;width:93px;height:18px;overflow:hidden"><div class="t" style="right:-8px;top:1.5px;font-size:15px;color:#111">1.00</div></div>
  <div class="t" style="left:457.7px;top:519.7px;font-size:14px;color:#111;letter-spacing:0.25px">2010-11-07 11</div>
  <div class="a" style="left:5.7px;top:545.1px;width:8.0px;height:8.0px;border:2px solid #5a70a8;border-radius:50%;background:#fff"></div>
  <div class="a" style="left:13.5px;top:548.0px;width:5.5px;height:2.0px;background:#5a70a8"></div>
  <svg class="a" style="left:24.0px;top:541.1px" width="20" height="16"><use href="#c-tfolder"/></svg>
  <div class="t" style="left:48.7px;top:542.3px;font-size:13.5px;color:#111;letter-spacing:0.4px">顾客回访确认表</div>
  <div class="t" style="left:208.5px;top:541.6px;width:46px;text-align:center;font-size:15px;color:#111">25</div>
  <svg class="a" style="left:257.0px;top:541.1px" width="16" height="16"><circle cx="8" cy="8" r="7" fill="url(#gRed)" stroke="#bcc4bc" stroke-width="1.6"/></svg>
  <div class="t" style="left:276.5px;top:542.3px;font-size:13.5px;color:#000;-webkit-text-stroke:0.25px #000">逾期</div>
  <div class="a" style="left:349.0px;top:540.1px;width:93px;height:18px;overflow:hidden"><div class="t" style="right:-8px;top:1.5px;font-size:15px;color:#111">5.00</div></div>
  <div class="t" style="left:457.7px;top:542.1px;font-size:14px;color:#111;letter-spacing:0.25px">2010-11-07 11</div>
  <div class="a" style="left:5.7px;top:567.5px;width:8.0px;height:8.0px;border:2px solid #5a70a8;border-radius:50%;background:#fff"></div>
  <div class="a" style="left:13.5px;top:570.5px;width:5.5px;height:2.0px;background:#5a70a8"></div>
  <svg class="a" style="left:24.0px;top:563.5px" width="20" height="16"><use href="#c-tfolder"/></svg>
  <div class="t" style="left:48.7px;top:564.8px;font-size:13.5px;color:#111;letter-spacing:0.4px">顾客回访确认表</div>
  <div class="t" style="left:208.5px;top:564.0px;width:46px;text-align:center;font-size:15px;color:#111">26</div>
  <svg class="a" style="left:257.0px;top:563.5px" width="16" height="16"><circle cx="8" cy="8" r="7" fill="url(#gRed)" stroke="#bcc4bc" stroke-width="1.6"/></svg>
  <div class="t" style="left:276.5px;top:564.8px;font-size:13.5px;color:#000;-webkit-text-stroke:0.25px #000">逾期</div>
  <div class="a" style="left:349.0px;top:562.5px;width:93px;height:18px;overflow:hidden"><div class="t" style="right:-8px;top:1.5px;font-size:15px;color:#111">5.00</div></div>
  <div class="t" style="left:457.7px;top:564.5px;font-size:14px;color:#111;letter-spacing:0.25px">2010-10-19 17</div>
  </div>
</div>
</body></html>
